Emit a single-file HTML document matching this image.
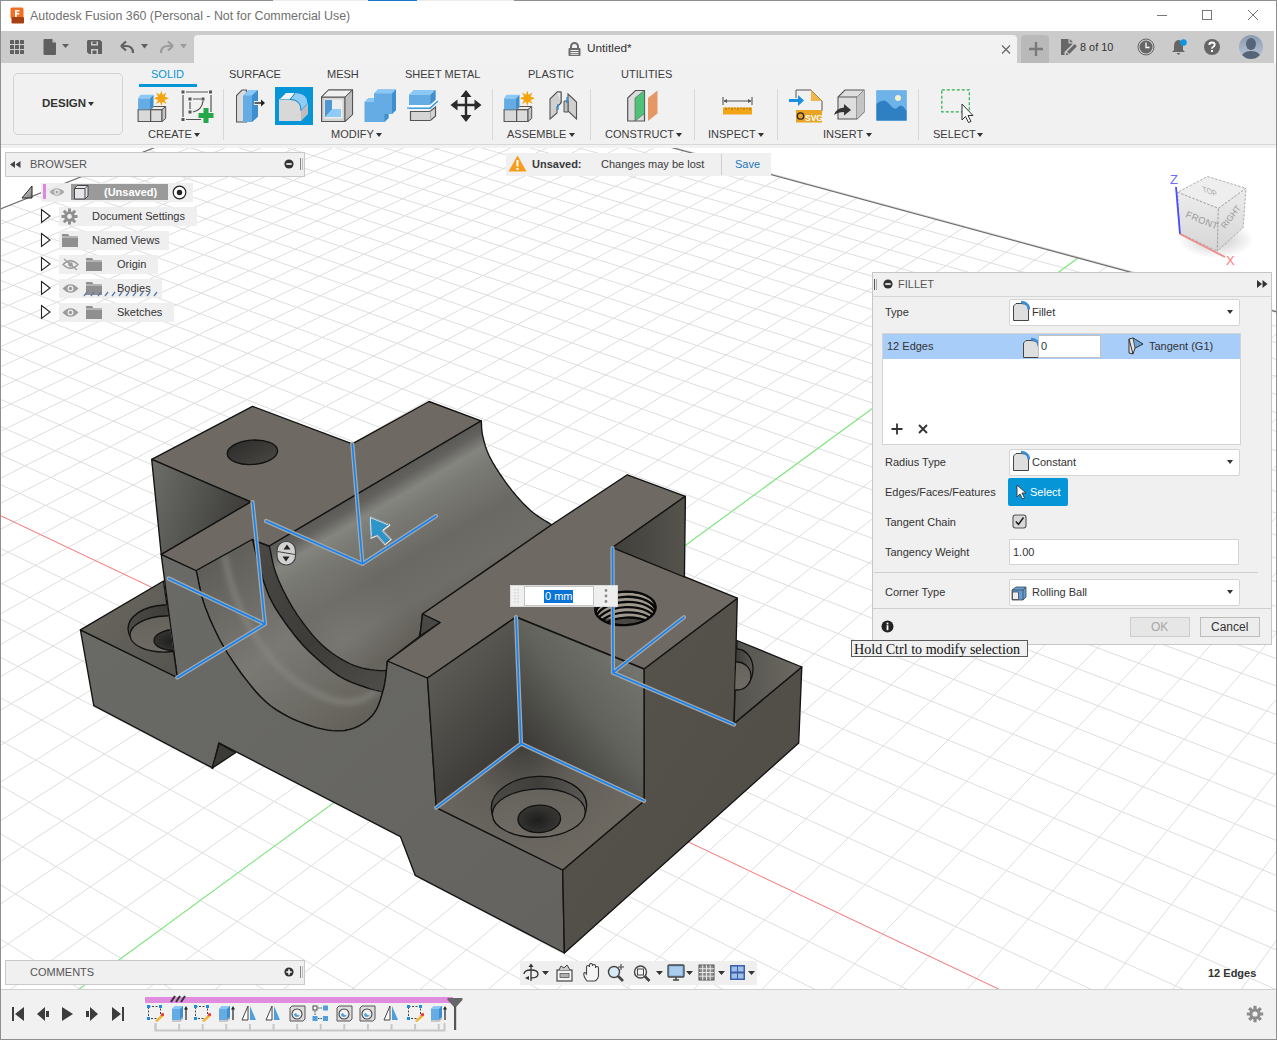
<!DOCTYPE html>
<html><head><meta charset="utf-8">
<style>
*{box-sizing:border-box;margin:0;padding:0}
html,body{width:1277px;height:1040px;overflow:hidden;background:#fff;font-family:"Liberation Sans",sans-serif;color:#333}
.a{position:absolute}
.t{position:absolute;white-space:nowrap;line-height:1}
.rib{font-size:11px;color:#3c3c3c}
.arr{position:absolute;width:0;height:0;border-left:3px solid transparent;border-right:3px solid transparent;border-top:4px solid #333}
.sep{position:absolute;width:1px;background:#d8d8d8}
</style></head><body>
<svg width="1277" height="1040" viewBox="0 0 1277 1040" style="position:absolute;left:0;top:0"><defs>
<linearGradient id="gFront" x1="0" y1="0" x2="1" y2="1"><stop offset="0" stop-color="#6a6a67"/><stop offset="1" stop-color="#64635f"/></linearGradient>
<linearGradient id="gRight" x1="0" y1="0" x2="1" y2="1"><stop offset="0" stop-color="#57544e"/><stop offset="1" stop-color="#4f4c46"/></linearGradient>
<linearGradient id="gGroove" gradientUnits="userSpaceOnUse" x1="269.0" y1="546.0" x2="368.1" y2="714.1"><stop offset="0" stop-color="#5a5955"/><stop offset="0.05" stop-color="#63625e"/><stop offset="0.12" stop-color="#858580"/><stop offset="0.21" stop-color="#7a7a75"/><stop offset="0.42" stop-color="#6b6963"/><stop offset="0.62" stop-color="#6f6d67"/><stop offset="0.8" stop-color="#625f59"/><stop offset="1" stop-color="#6a6862"/></linearGradient><radialGradient id="gGlow" gradientUnits="userSpaceOnUse" cx="345" cy="640" r="70"><stop offset="0" stop-color="#fff" stop-opacity="0.07"/><stop offset="1" stop-color="#fff" stop-opacity="0"/></radialGradient>
<linearGradient id="gDark1" x1="0" y1="0" x2="1" y2="0.3"><stop offset="0" stop-color="#6d6e6a"/><stop offset="1" stop-color="#3e3d39"/></linearGradient>
<linearGradient id="gDark2" gradientUnits="userSpaceOnUse" x1="440" y1="670" x2="521" y2="750"><stop offset="0" stop-color="#5c5a55"/><stop offset="1" stop-color="#3a3935"/></linearGradient>
<linearGradient id="gLight" gradientUnits="userSpaceOnUse" x1="522" y1="750" x2="630" y2="660"><stop offset="0" stop-color="#383733"/><stop offset="0.55" stop-color="#62625d"/><stop offset="1" stop-color="#74746f"/></linearGradient>
<linearGradient id="gDark3" x1="0" y1="0" x2="1" y2="0"><stop offset="0" stop-color="#3f3e3a"/><stop offset="1" stop-color="#57544e"/></linearGradient>
<linearGradient id="gBand" x1="0" y1="0" x2="1" y2="1"><stop offset="0" stop-color="#4a4946"/><stop offset="0.5" stop-color="#3d3c39"/><stop offset="1" stop-color="#55544f"/></linearGradient>
<linearGradient id="gCb" x1="0" y1="0" x2="1" y2="1"><stop offset="0" stop-color="#585752"/><stop offset="0.45" stop-color="#7a7974"/><stop offset="0.7" stop-color="#6b6962"/><stop offset="1" stop-color="#55534d"/></linearGradient>
<linearGradient id="gEar" x1="0" y1="0" x2="1" y2="1"><stop offset="0" stop-color="#6d6a63"/><stop offset="1" stop-color="#55534e"/></linearGradient>
<linearGradient id="gEarR" x1="0" y1="0" x2="1" y2="0"><stop offset="0" stop-color="#55534e"/><stop offset="1" stop-color="#6d6a63"/></linearGradient>
<radialGradient id="gFloor3" gradientUnits="userSpaceOnUse" cx="521" cy="744" r="130"><stop offset="0" stop-color="#403e3a"/><stop offset="0.45" stop-color="#625f59"/><stop offset="1" stop-color="#6e6a62"/></radialGradient>
<linearGradient id="gHole" x1="0" y1="0" x2="1" y2="1"><stop offset="0" stop-color="#2b2a28"/><stop offset="1" stop-color="#4a4946"/></linearGradient>
<radialGradient id="gHole2" cx="0.45" cy="0.55" r="0.6"><stop offset="0" stop-color="#1e1e1d"/><stop offset="1" stop-color="#3a3936"/></radialGradient>
<linearGradient id="gCbw" x1="0" y1="0" x2="1" y2="0"><stop offset="0" stop-color="#4b4a46"/><stop offset="0.5" stop-color="#3f3e3b"/><stop offset="1" stop-color="#5b5a55"/></linearGradient>
<linearGradient id="gFloorH" x1="0" y1="0" x2="0" y2="1"><stop offset="0" stop-color="#66635d"/><stop offset="1" stop-color="#6f6b64"/></linearGradient>
<filter id="blur3" x="-20%" y="-20%" width="140%" height="140%"><feGaussianBlur stdDeviation="2.5"/></filter><clipPath id="cCb"><path d="M196.1 570.5 L197.2 575.1 L198.1 579.7 L199.0 584.2 L200.0 588.7 L201.0 593.3 L202.2 598.0 L203.7 602.9 L205.5 608.0 L207.6 613.3 L209.8 618.9 L212.3 624.5 L215.0 630.3 L217.9 636.2 L221.0 642.2 L224.4 648.1 L228.0 654.0 L232.0 660.1 L236.3 666.4 L240.9 673.0 L245.8 679.4 L250.8 685.7 L255.9 691.7 L261.0 697.2 L266.0 702.0 L271.1 706.2 L276.3 709.9 L281.7 713.2 L287.1 716.2 L292.4 718.8 L297.8 721.1 L303.0 723.1 L308.0 725.0 L312.9 726.7 L317.8 728.1 L322.7 729.2 L327.4 730.1 L332.1 730.7 L336.6 730.9 L340.9 730.9 L345.0 730.5 L349.0 729.7 L352.8 728.6 L356.5 727.1 L360.1 725.3 L363.4 723.2 L366.6 721.0 L369.4 718.5 L372.0 716.0 L374.2 713.2 L376.1 710.2 L377.8 706.8 L379.2 703.3 L380.4 699.7 L381.5 696.1 L382.5 692.5 L383.5 689.0 L384.4 685.5 L385.0 682.1 L385.5 678.6 L386.0 675.1 L386.3 671.5 L386.7 668.0 L387.1 664.5 L387.5 661.0 L440.0 622.5 L440.0 622.5 L438.2 625.9 L436.5 629.1 L434.9 632.4 L433.2 635.6 L431.5 638.9 L429.6 642.4 L427.4 646.1 L425.0 650.0 L422.1 654.5 L418.8 659.6 L415.2 665.0 L411.4 670.5 L407.7 675.8 L404.1 680.7 L400.8 684.8 L398.0 688.0 L395.6 690.2 L393.7 691.6 L392.0 692.3 L390.4 692.6 L389.0 692.5 L387.4 692.3 L385.7 692.0 L383.8 691.8 L381.7 691.6 L379.4 691.3 L377.1 690.9 L374.7 690.3 L372.3 689.6 L369.7 688.8 L367.0 687.9 L364.2 686.9 L361.3 685.9 L358.2 684.8 L355.0 683.6 L351.7 682.4 L348.3 680.9 L344.9 679.3 L341.5 677.5 L338.0 675.4 L334.4 673.0 L330.6 670.2 L326.8 667.1 L322.9 663.9 L319.0 660.6 L315.3 657.3 L311.8 654.1 L308.6 651.0 L305.7 648.1 L302.9 645.2 L300.4 642.3 L298.0 639.5 L295.7 636.7 L293.4 633.8 L291.2 630.9 L289.0 628.0 L286.7 625.0 L284.5 621.9 L282.3 618.7 L280.1 615.5 L278.1 612.4 L276.1 609.3 L274.3 606.3 L272.7 603.5 L271.3 600.8 L270.0 598.3 L269.0 595.9 L268.0 593.6 L267.1 591.3 L266.2 588.9 L265.4 586.5 L264.5 584.0 L263.6 581.4 L262.7 578.7 L261.9 576.0 L261.1 573.2 L260.3 570.4 L259.5 567.6 L258.8 564.8 L258.0 562.0 L257.2 559.2 L256.5 556.3 L255.8 553.4 L255.1 550.6 L254.4 547.7 L253.7 544.8 L253.0 541.9 L252.3 539.0Z"/></clipPath><clipPath id="cGroove"><path d="M196.1 570.5 L197.2 575.1 L198.1 579.7 L199.0 584.2 L200.0 588.7 L201.0 593.3 L202.2 598.0 L203.7 602.9 L205.5 608.0 L207.6 613.3 L209.8 618.9 L212.3 624.5 L215.0 630.3 L217.9 636.2 L221.0 642.2 L224.4 648.1 L228.0 654.0 L232.0 660.1 L236.3 666.4 L240.9 673.0 L245.8 679.4 L250.8 685.7 L255.9 691.7 L261.0 697.2 L266.0 702.0 L271.1 706.2 L276.3 709.9 L281.7 713.2 L287.1 716.2 L292.4 718.8 L297.8 721.1 L303.0 723.1 L308.0 725.0 L312.9 726.7 L317.8 728.1 L322.7 729.2 L327.4 730.1 L332.1 730.7 L336.6 730.9 L340.9 730.9 L345.0 730.5 L349.0 729.7 L352.8 728.6 L356.5 727.1 L360.1 725.3 L363.4 723.2 L366.6 721.0 L369.4 718.5 L372.0 716.0 L374.2 713.2 L376.1 710.2 L377.8 706.8 L379.2 703.3 L380.4 699.7 L381.5 696.1 L382.5 692.5 L383.5 689.0 L384.4 685.5 L385.0 682.1 L385.5 678.6 L386.0 675.1 L386.3 671.5 L386.7 668.0 L387.1 664.5 L387.5 661.0 L420.0 636.0 L440.0 622.5 L422.5 614.0 L551.7 524.8 L549.4 523.3 L547.1 521.9 L544.7 520.5 L542.4 519.1 L540.1 517.7 L537.8 516.1 L535.5 514.5 L533.3 512.8 L531.1 511.0 L529.0 509.1 L526.9 507.1 L524.8 505.0 L522.7 502.9 L520.6 500.6 L518.5 498.3 L516.4 495.9 L514.2 493.3 L512.0 490.6 L509.8 487.7 L507.6 484.8 L505.4 481.8 L503.3 478.9 L501.3 476.0 L499.5 473.3 L497.8 470.7 L496.1 468.1 L494.6 465.6 L493.1 463.2 L491.8 460.8 L490.5 458.4 L489.3 456.0 L488.2 453.6 L487.2 451.2 L486.3 448.8 L485.5 446.5 L484.8 444.1 L484.1 441.8 L483.6 439.6 L483.1 437.4 L482.6 435.3 L482.2 433.3 L482.0 431.4 L481.8 429.5 L481.6 427.7 L481.5 425.9 L481.5 424.1 L481.3 422.3 L481.2 420.5 L269.0 546.0 L252.0 539.5Z"/></clipPath>
<clipPath id="cEar"><path d="M80.4 629.8 L163.5 581.0 L177.3 677.5Z"/></clipPath>
<clipPath id="cEarR"><path d="M734.0 723.5 L801.8 667.0 L737.0 640.5Z"/></clipPath>
<clipPath id="cTh"><ellipse cx="625.4" cy="608.4" rx="30.4" ry="16.8" transform="rotate(-3 625.4 608.4)"/></clipPath>
</defs>
<rect x="1" y="146" width="1275" height="843" fill="#fff"/>
<g><path d="M-45256.8 18233.0L364.1 64.1M-44527.1 18230.3L383.5 69.4M-43797.5 18227.5L403.2 74.7M-43067.9 18224.8L423.1 80.2M-42338.2 18222.1L443.3 85.6M-41608.6 18219.3L463.8 91.2M-40879.0 18216.6L484.5 96.8M-40149.4 18213.9L505.5 102.5M-39419.7 18211.1L526.7 108.3M-38690.1 18208.4L548.3 114.2M-37960.5 18205.7L570.1 120.1M-37230.8 18202.9L592.3 126.1M-36501.2 18200.2L614.7 132.2M-35771.6 18197.4L637.5 138.4M-35042.0 18194.7L660.5 144.6M-34312.3 18192.0L683.9 151.0M-33582.7 18189.2L707.6 157.4M-32853.1 18186.5L731.6 163.9M-32123.4 18183.8L756.0 170.6M-31393.8 18181.0L780.7 177.3M-30664.2 18178.3L805.8 184.1M-29934.6 18175.6L831.3 191.0M-29204.9 18172.8L857.1 198.0M-28475.3 18170.1L883.3 205.1M-27745.7 18167.4L909.9 212.3M-27016.0 18164.6L936.8 219.6M-26286.4 18161.9L964.2 227.1M-25556.8 18159.2L992.0 234.6M-24827.2 18156.4L1020.2 242.3M-24097.5 18153.7L1048.9 250.1M-23367.9 18150.9L1078.0 258.0M-22638.3 18148.2L1107.5 266.0M-21908.6 18145.5L1137.5 274.1M-21179.0 18142.7L1168.0 282.4M-20449.4 18140.0L1199.0 290.8M-19719.8 18137.3L1230.5 299.4M-18990.1 18134.5L1262.4 308.1M-18260.5 18131.8L1294.9 316.9M-17530.9 18129.1L1328.0 325.9M-16801.2 18126.3L1361.6 335.0M-16071.6 18123.6L1395.7 344.3M-15342.0 18120.9L1430.5 353.7M-14612.4 18118.1L1465.8 363.3M-13882.7 18115.4L1501.7 373.0M-13153.1 18112.7L1538.3 383.0M-12423.5 18109.9L1575.5 393.1M-11693.8 18107.2L1613.3 403.3M-10964.2 18104.4L1651.8 413.8M-10234.6 18101.7L1691.1 424.4M-9505.0 18099.0L1731.0 435.3M-8775.3 18096.2L1771.6 446.3M-8045.7 18093.5L1813.1 457.6M-7316.1 18090.8L1855.2 469.0M-6586.4 18088.0L1898.2 480.7M-5856.8 18085.3L1942.0 492.6M-5127.2 18082.6L1986.6 504.7M-4397.6 18079.8L2032.1 517.1M-3667.9 18077.1L2078.5 529.7M-2938.3 18074.4L2125.8 542.5M-2208.7 18071.6L2174.1 555.6M-1479.0 18068.9L2223.3 569.0M-749.4 18066.1L2273.5 582.6M-19.8 18063.4L2324.7 596.5M709.8 18060.7L2377.1 610.7M1439.5 18057.9L2430.5 625.2M2169.1 18055.2L2485.0 640.0M2898.7 18052.5L2540.7 655.2M3628.4 18049.7L2597.7 670.6M4358.0 18047.0L2655.8 686.4M5087.6 18044.3L2715.3 702.6M5817.2 18041.5L2776.1 719.1M6546.9 18038.8L2838.2 735.9M7276.5 18036.1L2901.8 753.2M8006.1 18033.3L2966.9 770.9M8735.8 18030.6L3033.5 789.0M9465.4 18027.9L3101.6 807.5M10195.0 18025.1L3171.5 826.4M10924.6 18022.4L3243.0 845.8M11654.3 18019.6L3316.2 865.7M12383.9 18016.9L3391.3 886.1M13113.5 18014.2L3468.3 907.0M13843.2 18011.4L3547.2 928.5M14572.8 18008.7L3628.2 950.4M15302.4 18006.0L3711.3 973.0M16032.0 18003.2L3796.7 996.2M16761.7 18000.5L3884.3 1020.0M17491.3 17997.8L3974.3 1044.4M18220.9 17995.0L4066.8 1069.5M18950.6 17992.3L4161.9 1095.3M19680.2 17989.6L4259.7 1121.9M20409.8 17986.8L4360.3 1149.2M21139.4 17984.1L4463.9 1177.3M21869.1 17981.4L4570.5 1206.3M22598.7 17978.6L4680.4 1236.1M23328.3 17975.9L4793.6 1266.9M24058.0 17973.1L4910.4 1298.6M24787.6 17970.4L5030.8 1331.3M25517.2 17967.7L5155.1 1365.0M26246.8 17964.9L5283.5 1399.9M26976.5 17962.2L5416.1 1435.9M27706.1 17959.5L5553.2 1473.1M28435.7 17956.7L5695.0 1511.6M29165.4 17954.0L5841.7 1551.5M29895.0 17951.3L5993.7 1592.7M30624.6 17948.5L6151.2 1635.5M31354.2 17945.8L6314.4 1679.8M32083.9 17943.1L6483.8 1725.8M32813.5 17940.3L6659.7 1773.6M33543.1 17937.6L6842.4 1823.2M34272.8 17934.8L7032.4 1874.8M35002.4 17932.1L7230.1 1928.5M35732.0 17929.4L7436.0 1984.4M36461.6 17926.6L7650.6 2042.6M37191.3 17923.9L7874.4 2103.4M37920.9 17921.2L8108.2 2166.9M38650.5 17918.4L8352.5 2233.2M39380.2 17915.7L8608.1 2302.6M40109.8 17913.0L8875.7 2375.3M40839.4 17910.2L9156.4 2451.5M41569.0 17907.5L9450.9 2531.5M42298.7 17904.8L9760.5 2615.5M43028.3 17902.0L10086.2 2704.0M43757.9 17899.3L10429.4 2797.2M44487.6 17896.6L10791.5 2895.5M45217.2 17893.8L11174.2 2999.4M45946.8 17891.1L11579.1 3109.4M46676.4 17888.3L12008.4 3225.9M47406.1 17885.6L12464.3 3349.7M48135.7 17882.9L12949.3 3481.4M48865.3 17880.1L13466.3 3621.8M49595.0 17877.4L14018.6 3771.7M50324.6 17874.7L14609.9 3932.3M51054.2 17871.9L15244.6 4104.6M51783.8 17869.2L15927.6 4290.1M52513.5 17866.5L16664.6 4490.2M53243.1 17863.7L17462.2 4706.8M53972.7 17861.0L18328.3 4942.0M54702.4 17858.3L19272.2 5198.2M55432.0 17855.5L20304.6 5478.6M56161.6 17852.8L21438.9 5786.6M56891.2 17850.1L22690.7 6126.5M57620.9 17847.3L24079.4 6503.5M58350.5 17844.6L25628.7 6924.2M59080.1 17841.8L27368.1 7396.5M59809.8 17839.1L29335.0 7930.6M60539.4 17836.4L31577.2 8539.4M61269.0 17833.6L34156.7 9239.8M61998.6 17830.9L37155.9 10054.2M62728.3 17828.2L40686.2 11012.8M63457.9 17825.4L44902.4 12157.6M64187.5 17822.7L50026.1 13548.9M64917.2 17820.0L56385.3 15275.6M65646.8 17817.2L64488.4 17475.8M-41380.4 16689.2L-44795.4 18231.3M-34981.7 14140.9L-43825.2 18227.6M-30211.3 12241.0L-42854.9 18224.0M-26517.8 10770.1L-41884.7 18220.4M-23573.5 9597.5L-40914.4 18216.7M-21171.5 8640.9L-39944.2 18213.1M-19174.6 7845.6L-38974.0 18209.5M-17488.2 7174.0L-38003.7 18205.8M-16045.2 6599.3L-37033.5 18202.2M-14796.5 6101.9L-36063.2 18198.5M-13705.2 5667.3L-35093.0 18194.9M-12743.3 5284.2L-34122.7 18191.3M-11889.2 4944.1L-33152.5 18187.6M-11125.6 4640.0L-32182.3 18184.0M-10439.0 4366.5L-31212.0 18180.4M-9818.2 4119.3L-30241.8 18176.7M-9254.1 3894.6L-29271.5 18173.1M-8739.5 3689.7L-28301.3 18169.4M-8267.9 3501.9L-27331.0 18165.8M-7834.3 3329.2L-26360.8 18162.2M-7434.3 3169.9L-25390.5 18158.5M-7064.0 3022.4L-24420.3 18154.9M-6720.3 2885.5L-23450.1 18151.3M-6400.4 2758.1L-22479.8 18147.6M-6102.0 2639.3L-21509.6 18144.0M-5822.9 2528.1L-20539.3 18140.3M-5561.3 2424.0L-19569.1 18136.7M-5315.7 2326.1L-18598.8 18133.1M-5084.5 2234.1L-17628.6 18129.4M-4866.6 2147.3L-16658.4 18125.8M-4660.9 2065.3L-15688.1 18122.2M-4466.3 1987.9L-14717.9 18118.5M-4282.0 1914.5L-13747.6 18114.9M-4107.2 1844.8L-12777.4 18111.2M-3941.2 1778.7L-11807.1 18107.6M-3783.3 1715.8L-10836.9 18104.0M-3632.9 1655.9L-9866.7 18100.3M-3489.5 1598.8L-8896.4 18096.7M-3352.7 1544.4L-7926.2 18093.1M-3222.0 1492.3L-6955.9 18089.4M-3097.0 1442.5L-5985.7 18085.8M-2977.3 1394.9L-5015.4 18082.1M-2862.6 1349.2L-4045.2 18078.5M-2752.7 1305.4L-3074.9 18074.9M-2647.1 1263.3L-2104.7 18071.2M-2545.7 1222.9L-1134.5 18067.6M-2448.2 1184.1L-164.2 18064.0M-2354.4 1146.8L806.0 18060.3M-2264.0 1110.8L1776.3 18056.7M-2177.0 1076.1L2746.5 18053.0M-2093.1 1042.7L3716.8 18049.4M-2012.1 1010.4L4687.0 18045.8M-1933.9 979.3L5657.2 18042.1M-1858.4 949.2L6627.5 18038.5M-1785.4 920.2L7597.7 18034.9M-1714.8 892.0L8568.0 18031.2M-1646.5 864.8L9538.2 18027.6M-1580.4 838.5L10508.5 18023.9M-1516.3 813.0L11478.7 18020.3M-1454.2 788.3L12448.9 18016.7M-1394.0 764.3L13419.2 18013.0M-1335.6 741.0L14389.4 18009.4M-1278.9 718.4L15359.7 18005.8M-1223.9 696.5L16329.9 18002.1M-1170.4 675.2L17300.2 17998.5M-1118.4 654.5L18270.4 17994.8M-1067.9 634.4L19240.6 17991.2M-1018.8 614.9L20210.9 17987.6M-971.0 595.8L21181.1 17983.9M-924.5 577.3L22151.4 17980.3M-879.2 559.3L23121.6 17976.7M-835.1 541.7L24091.9 17973.0M-792.1 524.6L25062.1 17969.4M-750.3 507.9L26032.4 17965.7M-709.4 491.6L27002.6 17962.1M-669.6 475.8L27972.8 17958.5M-630.7 460.3L28943.1 17954.8M-592.8 445.2L29913.3 17951.2M-555.8 430.5L30883.6 17947.6M-519.7 416.1L31853.8 17943.9M-484.4 402.0L32824.1 17940.3M-449.9 388.3L33794.3 17936.6M-416.2 374.9L34764.5 17933.0M-383.2 361.7L35734.8 17929.4M-351.0 348.9L36705.0 17925.7M-319.5 336.4L37675.3 17922.1M-288.7 324.1L38645.5 17918.5M-258.6 312.1L39615.8 17914.8M-229.1 300.3L40586.0 17911.2M-200.2 288.8L41556.2 17907.5M-171.9 277.6L42526.5 17903.9M-144.2 266.5L43496.7 17900.3M-117.1 255.7L44467.0 17896.6M-90.5 245.1L45437.2 17893.0M-64.4 234.8L46407.5 17889.4M-38.9 224.6L47377.7 17885.7M-13.9 214.6L48347.9 17882.1M10.7 204.9L49318.2 17878.4M34.8 195.3L50288.4 17874.8M58.4 185.9L51258.7 17871.2M81.5 176.6L52228.9 17867.5M104.3 167.6L53199.2 17863.9M126.6 158.7L54169.4 17860.3M148.5 150.0L55139.7 17856.6M170.0 141.4L56109.9 17853.0M191.1 133.0L57080.1 17849.3M211.9 124.7L58050.4 17845.7M232.2 116.6L59020.6 17842.1M252.2 108.7L59990.9 17838.4M271.9 100.8L60961.1 17834.8M291.2 93.1L61931.4 17831.2M310.2 85.6L62901.6 17827.5M328.9 78.1L63871.8 17823.9M347.3 70.8L64842.1 17820.2M365.3 63.6L65812.3 17816.6" stroke="#dedede" stroke-width="1" fill="none"/>
<path d="M-351.0 348.9L36705.0 17925.7" stroke="#ff7d7d" stroke-width="1" fill="none"/>
<path d="M-23367.9 18150.9L1078.0 258.0" stroke="#7be87b" stroke-width="1.1" fill="none"/>
<path d="M364.1 64.1L65744.4 17816.9M-45256.8 18233.0L364.1 64.1" stroke="#6f6f6f" stroke-width="1.3" fill="none"/></g>
<g><path d="M196.1 570.5 L197.2 575.1 L198.1 579.7 L199.0 584.2 L200.0 588.7 L201.0 593.3 L202.2 598.0 L203.7 602.9 L205.5 608.0 L207.6 613.3 L209.8 618.9 L212.3 624.5 L215.0 630.3 L217.9 636.2 L221.0 642.2 L224.4 648.1 L228.0 654.0 L232.0 660.1 L236.3 666.4 L240.9 673.0 L245.8 679.4 L250.8 685.7 L255.9 691.7 L261.0 697.2 L266.0 702.0 L271.1 706.2 L276.3 709.9 L281.7 713.2 L287.1 716.2 L292.4 718.8 L297.8 721.1 L303.0 723.1 L308.0 725.0 L312.9 726.7 L317.8 728.1 L322.7 729.2 L327.4 730.1 L332.1 730.7 L336.6 730.9 L340.9 730.9 L345.0 730.5 L349.0 729.7 L352.8 728.6 L356.5 727.1 L360.1 725.3 L363.4 723.2 L366.6 721.0 L369.4 718.5 L372.0 716.0 L374.2 713.2 L376.1 710.2 L377.8 706.8 L379.2 703.3 L380.4 699.7 L381.5 696.1 L382.5 692.5 L383.5 689.0 L384.4 685.5 L385.0 682.1 L385.5 678.6 L386.0 675.1 L386.3 671.5 L386.7 668.0 L387.1 664.5 L387.5 661.0 L420.0 636.0 L440.0 622.5 L422.5 614.0 L551.7 524.8 L549.4 523.3 L547.1 521.9 L544.7 520.5 L542.4 519.1 L540.1 517.7 L537.8 516.1 L535.5 514.5 L533.3 512.8 L531.1 511.0 L529.0 509.1 L526.9 507.1 L524.8 505.0 L522.7 502.9 L520.6 500.6 L518.5 498.3 L516.4 495.9 L514.2 493.3 L512.0 490.6 L509.8 487.7 L507.6 484.8 L505.4 481.8 L503.3 478.9 L501.3 476.0 L499.5 473.3 L497.8 470.7 L496.1 468.1 L494.6 465.6 L493.1 463.2 L491.8 460.8 L490.5 458.4 L489.3 456.0 L488.2 453.6 L487.2 451.2 L486.3 448.8 L485.5 446.5 L484.8 444.1 L484.1 441.8 L483.6 439.6 L483.1 437.4 L482.6 435.3 L482.2 433.3 L482.0 431.4 L481.8 429.5 L481.6 427.7 L481.5 425.9 L481.5 424.1 L481.3 422.3 L481.2 420.5 L269.0 546.0 L252.0 539.5Z" fill="url(#gGroove)" stroke="#131313" stroke-width="1.35" stroke-linejoin="round" /><path d="M196.1 570.5 L197.2 575.1 L198.1 579.7 L199.0 584.2 L200.0 588.7 L201.0 593.3 L202.2 598.0 L203.7 602.9 L205.5 608.0 L207.6 613.3 L209.8 618.9 L212.3 624.5 L215.0 630.3 L217.9 636.2 L221.0 642.2 L224.4 648.1 L228.0 654.0 L232.0 660.1 L236.3 666.4 L240.9 673.0 L245.8 679.4 L250.8 685.7 L255.9 691.7 L261.0 697.2 L266.0 702.0 L271.1 706.2 L276.3 709.9 L281.7 713.2 L287.1 716.2 L292.4 718.8 L297.8 721.1 L303.0 723.1 L308.0 725.0 L312.9 726.7 L317.8 728.1 L322.7 729.2 L327.4 730.1 L332.1 730.7 L336.6 730.9 L340.9 730.9 L345.0 730.5 L349.0 729.7 L352.8 728.6 L356.5 727.1 L360.1 725.3 L363.4 723.2 L366.6 721.0 L369.4 718.5 L372.0 716.0 L374.2 713.2 L376.1 710.2 L377.8 706.8 L379.2 703.3 L380.4 699.7 L381.5 696.1 L382.5 692.5 L383.5 689.0 L384.4 685.5 L385.0 682.1 L385.5 678.6 L386.0 675.1 L386.3 671.5 L386.7 668.0 L387.1 664.5 L387.5 661.0 L420.0 636.0 L440.0 622.5 L422.5 614.0 L551.7 524.8 L549.4 523.3 L547.1 521.9 L544.7 520.5 L542.4 519.1 L540.1 517.7 L537.8 516.1 L535.5 514.5 L533.3 512.8 L531.1 511.0 L529.0 509.1 L526.9 507.1 L524.8 505.0 L522.7 502.9 L520.6 500.6 L518.5 498.3 L516.4 495.9 L514.2 493.3 L512.0 490.6 L509.8 487.7 L507.6 484.8 L505.4 481.8 L503.3 478.9 L501.3 476.0 L499.5 473.3 L497.8 470.7 L496.1 468.1 L494.6 465.6 L493.1 463.2 L491.8 460.8 L490.5 458.4 L489.3 456.0 L488.2 453.6 L487.2 451.2 L486.3 448.8 L485.5 446.5 L484.8 444.1 L484.1 441.8 L483.6 439.6 L483.1 437.4 L482.6 435.3 L482.2 433.3 L482.0 431.4 L481.8 429.5 L481.6 427.7 L481.5 425.9 L481.5 424.1 L481.3 422.3 L481.2 420.5 L269.0 546.0 L252.0 539.5Z" fill="url(#gGlow)" /><path d="M252.0 539.5 L253.0 541.9 L253.7 544.8 L254.4 547.7 L255.1 550.6 L255.8 553.4 L256.5 556.3 L257.2 559.2 L258.0 562.0 L258.8 564.8 L259.5 567.6 L260.3 570.4 L261.1 573.2 L261.9 576.0 L262.7 578.7 L263.6 581.4 L264.5 584.0 L265.4 586.5 L266.2 588.9 L267.1 591.3 L268.0 593.6 L269.0 595.9 L270.0 598.3 L271.3 600.8 L272.7 603.5 L274.3 606.3 L276.1 609.3 L278.1 612.4 L280.1 615.5 L282.3 618.7 L284.5 621.9 L286.7 625.0 L289.0 628.0 L291.2 630.9 L293.4 633.8 L295.7 636.7 L298.0 639.5 L300.4 642.3 L302.9 645.2 L305.7 648.1 L308.6 651.0 L311.8 654.1 L315.3 657.3 L319.0 660.6 L322.9 663.9 L326.8 667.1 L330.6 670.2 L334.4 673.0 L338.0 675.4 L341.5 677.5 L344.9 679.3 L348.3 680.9 L351.7 682.4 L355.0 683.6 L358.2 684.8 L361.3 685.9 L364.2 686.9 L367.0 687.9 L369.7 688.8 L372.3 689.6 L374.7 690.3 L377.1 690.9 L379.4 691.3 L381.7 691.6 L383.8 691.8 L385.7 692.0 L387.4 692.3 L389.0 692.5 L390.4 692.6 L392.0 692.3 L393.7 691.6 L395.6 690.2 L398.0 688.0 L400.8 684.8 L404.1 680.7 L407.7 675.8 L411.4 670.5 L415.2 665.0 L418.8 659.6 L422.1 654.5 L425.0 650.0 L427.4 646.1 L429.6 642.4 L431.5 638.9 L433.2 635.6 L434.9 632.4 L436.5 629.1 L438.2 625.9 L440.0 622.5 L422.5 614.0 L422.0 617.3 L421.6 620.6 L421.3 623.9 L421.0 627.2 L420.5 630.5 L419.9 633.8 L419.1 636.9 L418.0 640.0 L416.6 643.0 L414.8 646.1 L412.9 649.1 L410.8 652.1 L408.5 654.9 L406.3 657.5 L404.1 659.9 L402.0 662.0 L400.1 663.8 L398.2 665.4 L396.5 666.8 L394.6 667.9 L392.7 668.9 L390.6 669.6 L388.2 670.2 L385.4 670.5 L382.2 670.6 L378.6 670.5 L374.8 670.2 L370.7 669.7 L366.5 669.0 L362.4 668.1 L358.3 666.9 L354.4 665.6 L350.6 664.0 L346.8 662.2 L343.0 660.2 L339.2 657.9 L335.5 655.5 L331.9 653.0 L328.4 650.3 L325.0 647.6 L321.8 644.7 L318.6 641.6 L315.6 638.4 L312.7 635.1 L309.8 631.6 L307.1 628.2 L304.5 624.8 L302.0 621.5 L299.6 618.2 L297.3 614.9 L295.2 611.6 L293.1 608.4 L291.2 605.1 L289.3 601.8 L287.5 598.6 L285.8 595.4 L284.2 592.3 L282.6 589.1 L281.2 586.1 L279.8 583.0 L278.5 580.0 L277.3 576.9 L276.2 573.9 L275.1 570.8 L274.1 567.7 L273.3 564.7 L272.6 561.6 L271.9 558.5 L271.3 555.5 L270.7 552.4 L270.1 549.4 L269.4 546.3Z" fill="url(#gBand)" stroke="#131313" stroke-width="1.35" stroke-linejoin="round" clip-path="url(#cGroove)"/><path d="M196.1 570.5 L197.2 575.1 L198.1 579.7 L199.0 584.2 L200.0 588.7 L201.0 593.3 L202.2 598.0 L203.7 602.9 L205.5 608.0 L207.6 613.3 L209.8 618.9 L212.3 624.5 L215.0 630.3 L217.9 636.2 L221.0 642.2 L224.4 648.1 L228.0 654.0 L232.0 660.1 L236.3 666.4 L240.9 673.0 L245.8 679.4 L250.8 685.7 L255.9 691.7 L261.0 697.2 L266.0 702.0 L271.1 706.2 L276.3 709.9 L281.7 713.2 L287.1 716.2 L292.4 718.8 L297.8 721.1 L303.0 723.1 L308.0 725.0 L312.9 726.7 L317.8 728.1 L322.7 729.2 L327.4 730.1 L332.1 730.7 L336.6 730.9 L340.9 730.9 L345.0 730.5 L349.0 729.7 L352.8 728.6 L356.5 727.1 L360.1 725.3 L363.4 723.2 L366.6 721.0 L369.4 718.5 L372.0 716.0 L374.2 713.2 L376.1 710.2 L377.8 706.8 L379.2 703.3 L380.4 699.7 L381.5 696.1 L382.5 692.5 L383.5 689.0 L384.4 685.5 L385.0 682.1 L385.5 678.6 L386.0 675.1 L386.3 671.5 L386.7 668.0 L387.1 664.5 L387.5 661.0 L440.0 622.5 L440.0 622.5 L438.2 625.9 L436.5 629.1 L434.9 632.4 L433.2 635.6 L431.5 638.9 L429.6 642.4 L427.4 646.1 L425.0 650.0 L422.1 654.5 L418.8 659.6 L415.2 665.0 L411.4 670.5 L407.7 675.8 L404.1 680.7 L400.8 684.8 L398.0 688.0 L395.6 690.2 L393.7 691.6 L392.0 692.3 L390.4 692.6 L389.0 692.5 L387.4 692.3 L385.7 692.0 L383.8 691.8 L381.7 691.6 L379.4 691.3 L377.1 690.9 L374.7 690.3 L372.3 689.6 L369.7 688.8 L367.0 687.9 L364.2 686.9 L361.3 685.9 L358.2 684.8 L355.0 683.6 L351.7 682.4 L348.3 680.9 L344.9 679.3 L341.5 677.5 L338.0 675.4 L334.4 673.0 L330.6 670.2 L326.8 667.1 L322.9 663.9 L319.0 660.6 L315.3 657.3 L311.8 654.1 L308.6 651.0 L305.7 648.1 L302.9 645.2 L300.4 642.3 L298.0 639.5 L295.7 636.7 L293.4 633.8 L291.2 630.9 L289.0 628.0 L286.7 625.0 L284.5 621.9 L282.3 618.7 L280.1 615.5 L278.1 612.4 L276.1 609.3 L274.3 606.3 L272.7 603.5 L271.3 600.8 L270.0 598.3 L269.0 595.9 L268.0 593.6 L267.1 591.3 L266.2 588.9 L265.4 586.5 L264.5 584.0 L263.6 581.4 L262.7 578.7 L261.9 576.0 L261.1 573.2 L260.3 570.4 L259.5 567.6 L258.8 564.8 L258.0 562.0 L257.2 559.2 L256.5 556.3 L255.8 553.4 L255.1 550.6 L254.4 547.7 L253.7 544.8 L253.0 541.9 L252.3 539.0Z" fill="url(#gCb)" stroke="#131313" stroke-width="1.35" stroke-linejoin="round" clip-path="url(#cGroove)"/><path d="M224.2 554.8 L225.3 559.3 L226.3 563.8 L227.3 568.3 L228.3 572.9 L229.4 577.4 L230.7 581.8 L232.1 586.3 L233.6 590.6 L235.1 595.0 L236.8 599.4 L238.4 603.7 L240.2 608.0 L242.1 612.2 L244.0 616.4 L246.1 620.6 L248.2 624.6 L250.5 628.7 L252.9 632.6 L255.4 636.5 L258.0 640.4 L260.6 644.2 L263.3 648.0 L266.1 651.7 L269.0 655.4 L271.9 659.0 L274.9 662.5 L278.0 665.9 L281.2 669.2 L284.6 672.4 L288.1 675.4 L291.7 678.3 L295.3 681.0 L299.1 683.5 L303.0 686.0 L306.9 688.3 L310.9 690.5 L314.9 692.7 L319.0 694.7 L323.1 696.5 L327.3 698.2 L331.5 699.6 L335.7 700.8 L340.0 701.7 L344.2 702.1 L348.4 702.1 L352.5 701.7 L356.5 701.0 L360.3 700.0 L363.9 698.7 L367.2 697.0 L370.1 695.1 L372.7 693.1 L375.3 691.0 L377.8 688.9 L380.2 686.7 L382.5 684.4 L384.6 681.9 L386.8 679.3 L389.0 676.8" fill="none" stroke="#8a8983" stroke-width="7" stroke-opacity="0.55" filter="url(#blur3)" clip-path="url(#cCb)"/><path d="M80.4 629.8 L177.3 677.5 L161.2 554.3 L196.1 570.5 L197.2 575.1 L198.1 579.7 L199.0 584.2 L200.0 588.7 L201.0 593.3 L202.2 598.0 L203.7 602.9 L205.5 608.0 L207.6 613.3 L209.8 618.9 L212.3 624.5 L215.0 630.3 L217.9 636.2 L221.0 642.2 L224.4 648.1 L228.0 654.0 L232.0 660.1 L236.3 666.4 L240.9 673.0 L245.8 679.4 L250.8 685.7 L255.9 691.7 L261.0 697.2 L266.0 702.0 L271.1 706.2 L276.3 709.9 L281.7 713.2 L287.1 716.2 L292.4 718.8 L297.8 721.1 L303.0 723.1 L308.0 725.0 L312.9 726.7 L317.8 728.1 L322.7 729.2 L327.4 730.1 L332.1 730.7 L336.6 730.9 L340.9 730.9 L345.0 730.5 L349.0 729.7 L352.8 728.6 L356.5 727.1 L360.1 725.3 L363.4 723.2 L366.6 721.0 L369.4 718.5 L372.0 716.0 L374.2 713.2 L376.1 710.2 L377.8 706.8 L379.2 703.3 L380.4 699.7 L381.5 696.1 L382.5 692.5 L383.5 689.0 L384.4 685.5 L385.0 682.1 L385.5 678.6 L386.0 675.1 L386.3 671.5 L386.7 668.0 L387.1 664.5 L387.5 661.0 L427.5 678.0 L436.3 807.7 L562.7 870.0 L564.4 953.0 L415.2 875.3 L400.4 836.6 L218.8 742.9 L212.9 768.2 L93.8 705.6Z" fill="url(#gFront)" stroke="#131313" stroke-width="1.35" stroke-linejoin="round" /><path d="M219.2 743.5 L235.4 752.7 L212.0 768.3Z" fill="#3d3b37" stroke="#131313" stroke-width="1.35" stroke-linejoin="round" /><path d="M80.4 629.8 L163.5 581.0 L177.3 677.5Z" fill="url(#gEar)" stroke="#131313" stroke-width="1.35" stroke-linejoin="round" /><path d="M562.7 870.0 L644.0 801.0 L644.0 669.0 L737.3 598.2 L734.0 723.5 L801.8 667.0 L798.7 743.0 L564.4 953.0Z" fill="url(#gRight)" stroke="#131313" stroke-width="1.35" stroke-linejoin="round" /><path d="M734.0 723.5 L801.8 667.0 L737.0 640.5Z" fill="url(#gEarR)" stroke="#131313" stroke-width="1.35" stroke-linejoin="round" /><path d="M151.7 459.4 L252.5 406.3 L352.3 443.8 L429.0 401.5 L481.0 420.8 L269.0 546.0 L252.0 539.5 L196.1 570.5 L161.2 554.3 L250.7 501.8Z" fill="#6e6a63" stroke="#131313" stroke-width="1.35" stroke-linejoin="round" /><path d="M151.7 459.4 L250.7 501.8 L161.2 554.3Z" fill="url(#gDark1)" stroke="#131313" stroke-width="1.35" stroke-linejoin="round" /><path d="M387.5 661.0 L427.5 678.0 L516.0 617.0 L644.0 669.0 L737.3 598.2 L612.5 547.5 L685.4 496.3 L627.3 474.8 L551.7 524.8 L422.5 614.0 L440.0 622.5 L387.5 661.0Z" fill="#6e6a63" stroke="#131313" stroke-width="1.35" stroke-linejoin="round" /><path d="M422.5 614.0 L440.0 622.5 L420.0 636.0Z" fill="#494844" stroke="#131313" stroke-width="1.35" stroke-linejoin="round" /><path d="M427.5 678.0 L516.0 617.0 L521.0 743.6 L436.3 807.7Z" fill="url(#gDark2)" stroke="#131313" stroke-width="1.35" stroke-linejoin="round" /><path d="M516.0 617.0 L644.0 669.0 L644.0 801.0 L521.0 743.6Z" fill="url(#gLight)" stroke="#131313" stroke-width="1.35" stroke-linejoin="round" /><path d="M436.3 807.7 L521.0 743.6 L644.0 801.0 L562.7 870.0Z" fill="url(#gFloor3)" stroke="#131313" stroke-width="1.35" stroke-linejoin="round" /><path d="M612.5 547.5 L685.4 496.3 L684.4 577.0Z" fill="url(#gDark3)" stroke="#131313" stroke-width="1.35" stroke-linejoin="round" /><ellipse cx="252.4" cy="452.3" rx="25.2" ry="12.2" transform="rotate(-4 252.4 452.3)" fill="url(#gHole)" stroke="#111" stroke-width="1.3" /><ellipse cx="539" cy="806.8" rx="47.7" ry="30.4" transform="rotate(-2 539 806.8)" fill="url(#gCbw)" stroke="#111" stroke-width="1.3" /><ellipse cx="538.8" cy="813" rx="46.5" ry="24.2" transform="rotate(-2 538.8 813)" fill="url(#gFloorH)" stroke="#111" stroke-width="1.3" /><ellipse cx="539.3" cy="818.9" rx="21.3" ry="13.7" transform="rotate(-2 539.3 818.9)" fill="url(#gHole2)" stroke="#111" stroke-width="1.3" /><g clip-path="url(#cEar)"><ellipse cx="165" cy="628" rx="37" ry="23" transform="rotate(-2 165 628)" fill="url(#gCbw)" stroke="#111" stroke-width="1.3" /><ellipse cx="166" cy="634" rx="36" ry="18" transform="rotate(-2 166 634)" fill="url(#gFloorH)" stroke="#111" stroke-width="1.3" /><ellipse cx="175" cy="640" rx="21" ry="10.5" transform="rotate(-2 175 640)" fill="url(#gHole2)" stroke="#111" stroke-width="1.3" /></g><g clip-path="url(#cEarR)"><ellipse cx="737" cy="669" rx="16" ry="20" transform="rotate(0 737 669)" fill="url(#gCbw)" stroke="#111" stroke-width="1.3" /><ellipse cx="737" cy="676" rx="14" ry="14" transform="rotate(0 737 676)" fill="url(#gFloorH)" stroke="#111" stroke-width="1.3" /></g><g clip-path="url(#cTh)"><rect x="590" y="585" width="70" height="45" fill="#9e988d"/><ellipse cx="622" cy="623" rx="24" ry="5.5" fill="#4a4843"/><ellipse cx="625.4" cy="608.4" rx="30.4" ry="16.8" transform="rotate(-3 625.4 608.4)" fill="none" stroke="#080808" stroke-width="2.3"/><ellipse cx="625.4" cy="613.6" rx="30.4" ry="16.8" transform="rotate(-3 625.4 608.4)" fill="none" stroke="#080808" stroke-width="2.3"/><ellipse cx="625.4" cy="618.8" rx="30.4" ry="16.8" transform="rotate(-3 625.4 608.4)" fill="none" stroke="#080808" stroke-width="2.3"/><ellipse cx="625.4" cy="624.0" rx="30.4" ry="16.8" transform="rotate(-3 625.4 608.4)" fill="none" stroke="#080808" stroke-width="2.3"/><ellipse cx="625.4" cy="629.2" rx="30.4" ry="16.8" transform="rotate(-3 625.4 608.4)" fill="none" stroke="#080808" stroke-width="2.3"/><ellipse cx="625.4" cy="634.4" rx="30.4" ry="16.8" transform="rotate(-3 625.4 608.4)" fill="none" stroke="#080808" stroke-width="2.3"/></g><ellipse cx="625.4" cy="608.4" rx="30.4" ry="16.8" transform="rotate(-3 625.4 608.4)" fill="none" stroke="#080808" stroke-width="2.2"/></g>
<path d="M252.5 502.0L265.0 624.0M265.0 624.0L177.3 677.5M265.0 624.0L168.7 578.5M352.3 444.0L362.5 563.8M362.5 563.8L266.0 521.0M362.5 563.8L436.0 516.0M516.0 617.0L521.0 743.6M521.0 743.6L436.3 807.7M521.0 743.6L644.0 800.8M612.5 548.0L613.0 672.7M613.0 672.7L683.8 617.3M613.0 672.7L734.0 724.6" stroke="#a8a6a2" stroke-width="4.2" stroke-linecap="round" fill="none"/><path d="M252.5 502.0L265.0 624.0M265.0 624.0L177.3 677.5M265.0 624.0L168.7 578.5M352.3 444.0L362.5 563.8M362.5 563.8L266.0 521.0M362.5 563.8L436.0 516.0M516.0 617.0L521.0 743.6M521.0 743.6L436.3 807.7M521.0 743.6L644.0 800.8M612.5 548.0L613.0 672.7M613.0 672.7L683.8 617.3M613.0 672.7L734.0 724.6" stroke="#0a84ff" stroke-width="1.6" stroke-linecap="round" fill="none"/>
<path d="M370 517L389.5 525L382.5 530.5L391 539.5L385 544.5L377 535.5L371 538z" fill="#2e95c9" stroke="#e8e8e8" stroke-width="1.6" stroke-linejoin="round"/><path d="M370 517L389.5 525L382.5 530.5L391 539.5L385 544.5L377 535.5L371 538z" fill="none" stroke="#2a4a66" stroke-width="0.5" transform="translate(-0.6 -0.6) scale(1.0)"/>
<rect x="277" y="541.5" width="18.5" height="23.5" rx="9" fill="#d2d2d2" stroke="#444" stroke-width="1.2"/><path d="M277.5 551.5L295 554.5" stroke="#444" stroke-width="1"/><path d="M287 544.5L290.5 549.5H283.5z M286 561.5L289.5 556.5H282.5z" fill="#222"/>
</svg>
<!-- window border -->
<div class="a" style="left:0;top:0;width:1277px;height:1040px;border:1px solid #8f8f8f;border-right-color:#8f8f8f;pointer-events:none;z-index:50"></div>
<!-- title bar -->
<div class="a" style="left:273px;top:0;width:241px;height:1px;background:#ececec;z-index:51"></div><div class="a" style="left:368px;top:0;width:49px;height:1px;background:#1a78c8;z-index:51"></div>
<div class="a" style="left:1px;top:1px;width:1275px;height:30px;background:#fff"></div>
<svg class="a" style="left:10px;top:7px" width="15" height="17" viewBox="0 0 15 17"><rect x="0.5" y="0.5" width="13" height="11" rx="1.5" fill="#f26f21"/><rect x="1.5" y="10" width="12.5" height="6.5" rx="1" fill="#a64012"/><path d="M5 3h4.5v1.6H6.8v1.5h2.4v1.5H6.8V10H5z" fill="#fff"/></svg>
<div class="t" style="left:30px;top:10px;font-size:12.4px;color:#707070">Autodesk Fusion 360 (Personal - Not for Commercial Use)</div>
<div class="a" style="left:1157px;top:15px;width:10px;height:1px;background:#777"></div>
<div class="a" style="left:1202px;top:10px;width:10px;height:10px;border:1px solid #777"></div>
<svg class="a" style="left:1247px;top:9px" width="12" height="12"><path d="M1 1L11 11M11 1L1 11" stroke="#777" stroke-width="1"/></svg>
<!-- tab bar -->
<div class="a" style="left:1px;top:31px;width:1273px;height:32px;background:#cbcbcb"></div>
<svg class="a" style="left:10px;top:40px" width="15" height="15"><g fill="#606060"><rect x="0" y="0" width="4" height="4" rx=".6"/><rect x="5" y="0" width="4" height="4" rx=".6"/><rect x="10" y="0" width="4" height="4" rx=".6"/><rect x="0" y="5" width="4" height="4" rx=".6"/><rect x="5" y="5" width="4" height="4" rx=".6"/><rect x="10" y="5" width="4" height="4" rx=".6"/><rect x="0" y="10" width="4" height="4" rx=".6"/><rect x="5" y="10" width="4" height="4" rx=".6"/><rect x="10" y="10" width="4" height="4" rx=".6"/></g></svg>
<svg class="a" style="left:43px;top:39px" width="28" height="17"><path d="M0.5 1Q0.5 0 1.5 0H9L13 4V15Q13 16 12 16H1.5Q0.5 16 0.5 15z" fill="#606060"/><path d="M9.5 0.5V3.5H12.5" fill="#cbcbcb"/><path d="M19 5h7l-3.5 4z" fill="#606060"/></svg>
<svg class="a" style="left:87px;top:40px" width="16" height="15"><path d="M1 0H13L15 2V14H2L0 12V1z" fill="#606060"/><rect x="4" y="1.5" width="7" height="4" fill="#cbcbcb"/><rect x="5.5" y="1.5" width="4" height="2.5" fill="#606060"/><rect x="4" y="9" width="7" height="5" fill="#cbcbcb"/><rect x="5.5" y="10.5" width="4" height="3.5" fill="#606060"/></svg>
<svg class="a" style="left:120px;top:40px" width="30" height="15"><path d="M13 13Q13 6 6 6H3" stroke="#606060" stroke-width="2.2" fill="none"/><path d="M1 6L6 1.5M1 6L6 10.5" stroke="#606060" stroke-width="2.2" fill="none"/><path d="M21 4h7l-3.5 4.5z" fill="#606060"/></svg>
<svg class="a" style="left:159px;top:40px" width="30" height="15"><path d="M2 13Q2 6 9 6H12" stroke="#9c9c9c" stroke-width="2.2" fill="none"/><path d="M14 6L9 1.5M14 6L9 10.5" stroke="#9c9c9c" stroke-width="2.2" fill="none"/><path d="M21 4h7l-3.5 4.5z" fill="#9c9c9c"/></svg>
<div class="a" style="left:194px;top:35px;width:823px;height:28px;background:#f2f2f2;border-radius:4px 4px 0 0"></div>
<svg class="a" style="left:568px;top:42px" width="13" height="14"><path d="M3 6V4.5a3.5 3.5 0 0 1 7 0V6" stroke="#6a6a6a" stroke-width="2" fill="none"/><rect x="0.5" y="6" width="12" height="8" rx="1" fill="#6a6a6a"/><path d="M2.5 8.5h8M2.5 10.5h8M2.5 12.3h8" stroke="#f2f2f2" stroke-width="1"/></svg>
<div class="t" style="left:587px;top:43px;font-size:11.8px;color:#333">Untitled*</div>
<svg class="a" style="left:1001px;top:45px" width="10" height="9"><path d="M1 0.5L9 8.5M9 0.5L1 8.5" stroke="#666" stroke-width="1.2"/></svg>
<div class="a" style="left:1021px;top:35px;width:28px;height:28px;background:#b9b9b9;border-radius:4px 4px 0 0"></div>
<svg class="a" style="left:1029px;top:42px" width="14" height="14"><path d="M7 0V14M0 7H14" stroke="#7a7a7a" stroke-width="2.4"/></svg>
<svg class="a" style="left:1060px;top:38px" width="18" height="18"><path d="M1 1H8.5V5.5H12.5V6L4.5 14V17H1z" fill="#676767"/><path d="M9.8 1L13 4.2H9.8z" fill="#676767"/><path d="M8.2 14.8L15.8 7.2" stroke="#676767" stroke-width="3.2"/><path d="M5.8 17.3L6.5 14.5L8.6 16.6z" fill="#676767"/></svg>
<div class="t" style="left:1080px;top:42px;font-size:10.9px;color:#333">8 of 10</div>
<svg class="a" style="left:1137px;top:38px" width="18" height="18"><circle cx="9" cy="9" r="8" stroke="#666" stroke-width="1" fill="none"/><circle cx="9" cy="9" r="6.5" fill="#666"/><path d="M9 4.5V9.5H12.5" stroke="#fff" stroke-width="1.3" fill="none"/></svg>
<svg class="a" style="left:1171px;top:38px" width="18" height="18"><path d="M7 2Q3 3 3 8V12L1 14H14L12 12V8Q12 3 8 2z" fill="#666"/><path d="M5.5 15H9.5L7.5 17z" fill="#666"/><circle cx="12.5" cy="4.5" r="3.2" fill="#0b96e5"/></svg>
<svg class="a" style="left:1203px;top:38px" width="18" height="18"><circle cx="9" cy="9" r="8" fill="#666"/><path d="M6.3 7Q6.3 4.5 9 4.5Q11.7 4.5 11.7 6.8Q11.7 8.2 10 9Q9 9.5 9 10.8" stroke="#fff" stroke-width="1.8" fill="none"/><rect x="8" y="12" width="2" height="2" fill="#fff"/></svg>
<svg class="a" style="left:1238px;top:34px" width="26" height="26"><defs><linearGradient id="av" x1="0" y1="0" x2="0" y2="1"><stop offset="0" stop-color="#8a9bb0"/><stop offset="1" stop-color="#b9c6d6"/></linearGradient><clipPath id="avc"><circle cx="13" cy="13" r="12"/></clipPath></defs><circle cx="13" cy="13" r="12" fill="url(#av)"/><g clip-path="url(#avc)" fill="#566478"><ellipse cx="13" cy="10" rx="5" ry="6"/><path d="M3 26Q3 17 13 17Q23 17 23 26z"/></g></svg>
<!-- ribbon -->
<div class="a" style="left:1px;top:63px;width:1275px;height:82px;background:#f1f1f1;border-bottom:1px solid #d8d8d8"></div><div class="a" style="left:1px;top:145px;width:1275px;height:3px;background:#f2f2f2"></div>
<div class="a" style="left:13px;top:73px;width:110px;height:62px;border:1px solid #d3d3d3;border-radius:5px"></div>
<div class="t" style="left:42px;top:98px;font-size:11.5px;font-weight:bold;color:#333">DESIGN</div>
<div class="arr" style="left:88px;top:102px"></div>
<div class="t rib" style="left:151px;top:69px;color:#0696d7;font-size:11px">SOLID</div>
<div class="a" style="left:139px;top:84px;width:58px;height:3px;background:#0696d7"></div>
<div class="t rib" style="left:229px;top:69px">SURFACE</div>
<div class="t rib" style="left:327px;top:69px">MESH</div>
<div class="t rib" style="left:405px;top:69px">SHEET METAL</div>
<div class="t rib" style="left:528px;top:69px">PLASTIC</div>
<div class="t rib" style="left:621px;top:69px">UTILITIES</div>
<div class="t rib" style="left:148px;top:129px">CREATE</div><div class="arr" style="left:194px;top:133px"></div>
<div class="t rib" style="left:331px;top:129px">MODIFY</div><div class="arr" style="left:376px;top:133px"></div>
<div class="t rib" style="left:507px;top:129px">ASSEMBLE</div><div class="arr" style="left:569px;top:133px"></div>
<div class="t rib" style="left:605px;top:129px">CONSTRUCT</div><div class="arr" style="left:676px;top:133px"></div>
<div class="t rib" style="left:708px;top:129px">INSPECT</div><div class="arr" style="left:758px;top:133px"></div>
<div class="t rib" style="left:823px;top:129px">INSERT</div><div class="arr" style="left:866px;top:133px"></div>
<div class="t rib" style="left:933px;top:129px">SELECT</div><div class="arr" style="left:977px;top:133px"></div>
<div class="sep" style="left:223px;top:89px;height:51px"></div>
<div class="sep" style="left:492px;top:89px;height:51px"></div>
<div class="sep" style="left:590px;top:89px;height:51px"></div>
<div class="sep" style="left:694px;top:89px;height:51px"></div>
<div class="sep" style="left:777px;top:89px;height:51px"></div>
<div class="sep" style="left:918px;top:89px;height:51px"></div>
<!-- CREATE: new component -->
<svg class="a" style="left:137px;top:89px" width="34" height="34" viewBox="0 0 34 34">
<path d="M1.1 20.6H13.7V32.5H1.1z" fill="#d9d9d9" stroke="#555" stroke-width="1.1"/>
<path d="M13.7 20.6H25V32.5H13.7z" fill="#dcdcdc" stroke="#555" stroke-width="1.1"/>
<path d="M13.7 20.6L16.8 17.5H28.7L25 20.6z" fill="#ededed" stroke="#555" stroke-width="1"/>
<path d="M25 20.6L28.7 17.5V29.5L25 32.5z" fill="#c4c4c4" stroke="#555" stroke-width="1"/>
<path d="M1.1 9.3H13V20.6H1.1z" fill="#64ace3"/>
<path d="M1.1 9.3L3.6 5.8H16.5L13 9.3z" fill="#8cc8f5"/>
<path d="M13 9.3L16.5 5.8V17.5L13 20.6z" fill="#3f8fcf"/>
<path d="M24.3 1.5L25.6 5.8L29.6 3.6L27.5 7.6L32 9.3L27.5 11L29.6 15L25.6 12.8L24.3 17.1L23 12.8L19 15L21.1 11L16.6 9.3L21.1 7.6L19 3.6L23 5.8z" fill="#f6a40e"/>
</svg>
<!-- CREATE: sketch -->
<svg class="a" style="left:181px;top:90px" width="33" height="33" viewBox="0 0 33 33">
<g fill="#555"><rect x="0.5" y="0.5" width="3" height="3"/><rect x="28" y="0.5" width="3" height="3"/><rect x="0.5" y="28" width="3" height="3"/><rect x="7.5" y="7.5" width="3" height="3"/><rect x="20.5" y="7.5" width="3" height="3"/><rect x="7.5" y="20.5" width="3" height="3"/></g>
<path d="M5 2H27M2 5V27M30 5V22M5 29.5H20M12 9H20M9 12V19M22 11Q21 20 12 22" stroke="#555" stroke-width="1.2" fill="none"/>
<path d="M22.5 18H27.5V23H32.5V28H27.5V33H22.5V28H17.5V23H22.5z" fill="#23a84a"/>
</svg>
<!-- MODIFY: press pull -->
<svg class="a" style="left:236px;top:89px" width="31" height="34" viewBox="0 0 31 34">
<path d="M0.5 33V6.5L6 1H10.5V33z" fill="#dcdcdc" stroke="#555" stroke-width="1.1"/>
<path d="M7 33V6.5L12.5 1H22V27.5L16 33z" fill="#64ace3"/>
<path d="M7 6.5L12.5 1H22L16 6.5z" fill="#8cc8f5"/>
<path d="M16 6.5L22 1V27.5L16 33z" fill="#3f8fcf"/>
<rect x="18" y="12" width="6" height="4" fill="#f1f1f1"/>
<path d="M18.5 14H27" stroke="#222" stroke-width="1.4"/><path d="M25 10.5L29 14L25 17.5z" fill="#222"/>
</svg>
<!-- MODIFY: fillet (active) -->
<div class="a" style="left:275px;top:87px;width:38px;height:38px;background:#0696d7"></div>
<svg class="a" style="left:277px;top:89px" width="34" height="34" viewBox="0 0 34 34">
<path d="M2 11L9 4H18L14 10H2z" fill="#f3f3f3"/>
<path d="M2 10.5H13Q24 10.5 24 21.5V32H2z" fill="#d8d8d8"/>
<path d="M13 10.5Q24 10.5 24 21.5L31 14.5Q31 4 18.5 3.5z" fill="#8ecbf5" stroke="#0a8ad0" stroke-width="1"/>
<path d="M24 21.5L31 14.5V25L24 32z" fill="#bdbdbd"/>
</svg>
<!-- MODIFY: shell -->
<svg class="a" style="left:321px;top:89px" width="33" height="34" viewBox="0 0 33 34">
<path d="M0.6 32.5V8L7.5 1H31.5V25.5L24 32.5z" fill="#d3d3d3" stroke="#555" stroke-width="1.2"/>
<path d="M0.6 8H24V32.5M24 8L31.5 1" fill="none" stroke="#555" stroke-width="1"/>
<path d="M0.6 8L7.5 1H31.5L24 8z" fill="#f0f0f0" stroke="#555" stroke-width="1"/>
<path d="M24 8L31.5 1V25.5L24 32.5z" fill="#bdbdbd" stroke="#555" stroke-width="1"/>
<rect x="3.5" y="10.5" width="18" height="19" fill="#eeeeee"/>
<path d="M4 11H11V20H20V28H4z" fill="#8ecbf5"/><path d="M4 11H11V20L4 28z" fill="#4f97d2"/>
</svg>
<!-- MODIFY: combine -->
<svg class="a" style="left:364px;top:89px" width="33" height="34" viewBox="0 0 33 34">
<path d="M10 4.5L14 0.5H32V21L28 25H24.5V29L20.5 33H0.5V13L4.5 9H10z" fill="#64ace3"/>
<path d="M10 4.5L14 0.5H32L28 4.5zM0.5 13L4.5 9H10V13z" fill="#8cc8f5"/>
<path d="M28 4.5L32 0.5V21L28 25zM20.5 33L24.5 29V25H20.5z" fill="#3f8fcf"/>
</svg>
<!-- MODIFY: split -->
<svg class="a" style="left:407px;top:89px" width="33" height="34" viewBox="0 0 33 34">
<path d="M2 6L7 1H28.5V15L23.5 20H2z" fill="#64ace3"/>
<path d="M2 6L7 1H28.5L23.5 6z" fill="#8cc8f5"/>
<path d="M23.5 6L28.5 1V15L23.5 20z" fill="#3f8fcf"/>
<path d="M2 17.5H23.5L31 11" stroke="#fff" stroke-width="3" fill="none"/>
<path d="M0 19H23L31 12" stroke="#1a8fe0" stroke-width="1.2" fill="none"/>
<path d="M3.5 22.5H23L28.5 18V27L23.5 31.5H3.5z" fill="#d5d5d5" stroke="#555" stroke-width="1.2"/>
<path d="M23.5 22.5V31.5" stroke="#aaa" stroke-width="1"/>
</svg>
<!-- MODIFY: move -->
<svg class="a" style="left:450px;top:89px" width="33" height="34" viewBox="0 0 33 34">
<path d="M16 3V31M3 16H29" stroke="#2b2b2b" stroke-width="2.4"/>
<path d="M16 1L21.5 8H10.5zM16 33L21.5 26H10.5zM0.5 16L7.5 10.5V21.5zM31.5 16L24.5 10.5V21.5z" fill="#2b2b2b"/>
</svg>
<!-- ASSEMBLE: new component -->
<svg class="a" style="left:503px;top:89px" width="34" height="34" viewBox="0 0 34 34">
<path d="M1.1 20.6H13.7V32.5H1.1z" fill="#d9d9d9" stroke="#555" stroke-width="1.1"/>
<path d="M13.7 20.6H25V32.5H13.7z" fill="#dcdcdc" stroke="#555" stroke-width="1.1"/>
<path d="M13.7 20.6L16.8 17.5H28.7L25 20.6z" fill="#ededed" stroke="#555" stroke-width="1"/>
<path d="M25 20.6L28.7 17.5V29.5L25 32.5z" fill="#c4c4c4" stroke="#555" stroke-width="1"/>
<path d="M1.1 9.3H13V20.6H1.1z" fill="#64ace3"/>
<path d="M1.1 9.3L3.6 5.8H16.5L13 9.3z" fill="#8cc8f5"/>
<path d="M13 9.3L16.5 5.8V17.5L13 20.6z" fill="#3f8fcf"/>
<path d="M24.3 1.5L25.6 5.8L29.6 3.6L27.5 7.6L32 9.3L27.5 11L29.6 15L25.6 12.8L24.3 17.1L23 12.8L19 15L21.1 11L16.6 9.3L21.1 7.6L19 3.6L23 5.8z" fill="#f6a40e"/>
</svg>
<!-- ASSEMBLE: joint -->
<svg class="a" style="left:549px;top:91px" width="30" height="30" viewBox="0 0 30 30">
<path d="M1 8L8 1H12V12L8 16V22L1 28z" fill="#d0d0d0" stroke="#555" stroke-width="1.1"/>
<path d="M8 1H12V12" fill="#e8e8e8" stroke="#555" stroke-width="1"/>
<path d="M19 3L27.5 11V28L19 20z" fill="#d0d0d0" stroke="#555" stroke-width="1.1"/>
<path d="M15 10V21H19V10z" fill="#c0c0c0" stroke="#555" stroke-width="1"/>
<path d="M9 13V19M18 6V12" stroke="#1a8fe0" stroke-width="1.3"/>
</svg>
<!-- CONSTRUCT -->
<svg class="a" style="left:627px;top:89px" width="32" height="33" viewBox="0 0 32 33">
<path d="M0.7 32V9L8.5 1.5H17.5V32z" fill="#dcdcdc" stroke="#555" stroke-width="1.2"/>
<path d="M8 32V9L17.5 1.5V24.5z" fill="#4fc27a" stroke="#555" stroke-width="0.6"/>
<path d="M21 32V9L30.5 1.5V24.5z" fill="#e59866"/>
</svg>
<!-- INSPECT -->
<svg class="a" style="left:722px;top:96px" width="31" height="20" viewBox="0 0 31 20">
<path d="M1 1V9M30 1V9M2 5H29" stroke="#555" stroke-width="1.1"/><path d="M1.5 5L5 3V7zM29.5 5L26 3V7z" fill="#555"/>
<rect x="1" y="11.5" width="29" height="7" fill="#f2a516"/>
<path d="M4 11.5V14M7 11.5V13M10 11.5V14M13 11.5V13M16 11.5V14M19 11.5V13M22 11.5V14M25 11.5V13M28 11.5V14" stroke="#8a5a00" stroke-width="0.8"/>
</svg>
<!-- INSERT: svg -->
<svg class="a" style="left:789px;top:89px" width="34" height="34" viewBox="0 0 34 34">
<path d="M7 9V1H22L33 12V22H7" fill="#f1f1f1" stroke="#555" stroke-width="1"/>
<path d="M22 1L33 12H22z" fill="#f0b848"/>
<rect x="7" y="21" width="26" height="12.5" fill="#e8a523"/>
<path d="M0 10H9V6L15 11.5L9 17V13H0z" fill="#1b8fe3"/>
<circle cx="11.5" cy="27" r="3.2" fill="none" stroke="#222" stroke-width="1.3"/>
<text x="16" y="31.5" font-family="Liberation Sans" font-weight="bold" font-size="8.5" fill="#fff">SVG</text>
</svg>
<!-- INSERT: mesh -->
<svg class="a" style="left:833px;top:89px" width="33" height="34" viewBox="0 0 33 34">
<path d="M5 30V8L12 1H31V23L24 30z" fill="#dedede" stroke="#555" stroke-width="1.1"/>
<path d="M5 8H24V30M24 8L31 1" fill="none" stroke="#555" stroke-width="1"/>
<path d="M24 8L31 1V23L24 30z" fill="#c4c4c4"/>
<path d="M1 26Q3 19 11 18.5V15L18 21L11 26.5V23Q5 23 1 26z" fill="#333"/>
</svg>
<!-- INSERT: canvas -->
<svg class="a" style="left:876px;top:90px" width="31" height="31" viewBox="0 0 31 31">
<rect x="0.5" y="0.5" width="30" height="30" fill="#3a8fd0"/>
<path d="M1 10V30.5H30V22Q26 12 22 22Q17 8 12 12Q7 4 1 10z" fill="#2d75b8" opacity="0"/>
<rect x="0.5" y="0.5" width="30" height="30" fill="#6db3ea"/>
<path d="M0.5 30.5V14Q8 6 15 16Q19 21 22 17Q26 13 30.5 21V30.5z" fill="#2f7fc3"/>
<circle cx="22" cy="8" r="3" fill="#f6f0c8"/>
</svg>
<!-- SELECT -->
<svg class="a" style="left:941px;top:89px" width="34" height="34" viewBox="0 0 34 34">
<rect x="0.8" y="0.8" width="27.5" height="22" fill="none" stroke="#2eae4e" stroke-width="1.2" stroke-dasharray="3 2"/>
<path d="M21 15V31L24.5 27.5L27.5 33.5L30 32.5L27 26.5H32z" fill="#f8f8f8" stroke="#333" stroke-width="1"/>
</svg>

<!-- unsaved bar -->
<div class="a" style="left:506px;top:153px;width:265px;height:23px;background:#f0f0f0"></div>
<svg class="a" style="left:508px;top:155px" width="19" height="17"><path d="M9.5 0.5L18.5 16.5H0.5z" fill="#f79d1e"/><rect x="8.5" y="5" width="2" height="6.5" fill="#fff"/><rect x="8.5" y="13" width="2" height="2" fill="#fff"/></svg>
<div class="t" style="left:532px;top:159px;font-size:11px;font-weight:bold;color:#3a3a3a">Unsaved:</div>
<div class="t" style="left:601px;top:159px;font-size:11px;color:#3a3a3a">Changes may be lost</div>
<div class="a" style="left:721px;top:154px;width:1px;height:21px;background:#cfcfcf"></div>
<div class="t" style="left:735px;top:159px;font-size:11px;color:#1b75bb">Save</div>
<!-- browser -->
<div class="a" style="left:5px;top:152px;width:300px;height:25px;background:#f0f0f0;border:1px solid #c9c9c9"></div>
<svg class="a" style="left:10px;top:161px" width="11" height="7"><path d="M5 0V7L0 3.5zM10.5 0V7L5.5 3.5z" fill="#444"/></svg>
<div class="t" style="left:30px;top:159px;font-size:11px;color:#555">BROWSER</div>
<svg class="a" style="left:284px;top:159px" width="10" height="10"><circle cx="5" cy="5" r="4.6" fill="#333"/><rect x="2.3" y="4.2" width="5.4" height="1.6" fill="#fff"/></svg>
<div class="a" style="left:300px;top:158px;width:1px;height:12px;background:#888"></div><div class="a" style="left:302px;top:158px;width:1px;height:12px;background:#bbb"></div>
<!-- tree -->
<svg class="a" style="left:21px;top:185px" width="12" height="14"><defs><linearGradient id="tri" x1="0" y1="0" x2="1" y2="1"><stop offset="0" stop-color="#eee"/><stop offset="1" stop-color="#777"/></linearGradient></defs><path d="M11 1V13H1z" fill="url(#tri)" stroke="#222" stroke-width="1"/></svg>
<div class="a" style="left:41px;top:183px;width:152px;height:19px;background:rgba(238,238,238,.92)"></div>
<div class="a" style="left:43px;top:184px;width:3px;height:15px;background:#dd88dd"></div>
<svg class="a" style="left:49px;top:187px" width="16" height="10"><path d="M0.5 5Q8 -2.5 15.5 5Q8 12.5 0.5 5z" fill="#aaa"/><circle cx="8" cy="5" r="2.8" fill="#eee"/><circle cx="8" cy="5" r="1.6" fill="#aaa"/></svg>
<div class="a" style="left:71px;top:184px;width:97px;height:16px;background:#9a9a9a"></div>
<svg class="a" style="left:73px;top:184px" width="17" height="16"><path d="M4 1.5H15V12L12 15H1.5V4.5z" fill="#e6e6ea" stroke="#444" stroke-width="1"/><path d="M1.5 4.5H12V15M12 4.5L15 1.5" fill="none" stroke="#444" stroke-width="1"/></svg>
<div class="t" style="left:104px;top:187px;font-size:11px;font-weight:bold;color:#fff">(Unsaved)</div>
<svg class="a" style="left:172px;top:185px" width="15" height="15"><circle cx="7.5" cy="7.5" r="6.3" fill="#fff" stroke="#222" stroke-width="1.2"/><circle cx="7.5" cy="7.5" r="2.7" fill="#222"/></svg>
<!-- rows -->
<div class="a" style="left:59px;top:207px;width:138px;height:19px;background:rgba(238,238,238,.92)"></div>
<div class="a" style="left:59px;top:231px;width:110px;height:19px;background:rgba(238,238,238,.92)"></div>
<div class="a" style="left:59px;top:255px;width:99px;height:19px;background:rgba(238,238,238,.92)"></div>
<div class="a" style="left:59px;top:279px;width:103px;height:19px;background:rgba(238,238,238,.92)"></div>
<div class="a" style="left:59px;top:303px;width:115px;height:19px;background:rgba(238,238,238,.92)"></div>
<svg class="a" style="left:40px;top:208px" width="12" height="120"><g fill="#fff" stroke="#222" stroke-width="1.1"><path d="M1.5 1.5L10 8L1.5 14.5z"/><path d="M1.5 25.5L10 32L1.5 38.5z"/><path d="M1.5 49.5L10 56L1.5 62.5z"/><path d="M1.5 73.5L10 80L1.5 86.5z"/><path d="M1.5 97.5L10 104L1.5 110.5z"/></g></svg>
<svg class="a" style="left:61px;top:208px" width="17" height="17"><g fill="#8f8f8f"><circle cx="8.5" cy="8.5" r="5.3"/><g stroke="#8f8f8f" stroke-width="3"><path d="M8.5 0.5V16.5M0.5 8.5H16.5M2.8 2.8L14.2 14.2M14.2 2.8L2.8 14.2"/></g></g><circle cx="8.5" cy="8.5" r="2.4" fill="#eee"/></svg>
<div class="t" style="left:92px;top:211px;font-size:11px;color:#333">Document Settings</div>
<svg class="a" style="left:62px;top:233px" width="17" height="15"><path d="M0 1H6L7.5 3H16V14H0z" fill="#8f8f8f"/><path d="M0 4H16" stroke="#eee" stroke-width="0.8"/></svg>
<div class="t" style="left:92px;top:235px;font-size:11px;color:#333">Named Views</div>
<svg class="a" style="left:62px;top:258px" width="17" height="13"><path d="M1 6.5Q8.5 -1 16 6.5Q8.5 14 1 6.5z" fill="none" stroke="#9a9a9a" stroke-width="1.3"/><circle cx="8.5" cy="6.5" r="2.3" fill="#9a9a9a"/><path d="M2 1L15 12" stroke="#9a9a9a" stroke-width="1.3"/></svg>
<svg class="a" style="left:86px;top:257px" width="17" height="15"><path d="M0 1H6L7.5 3H16V14H0z" fill="#8f8f8f"/><path d="M0 4H16" stroke="#eee" stroke-width="0.8"/></svg>
<div class="t" style="left:117px;top:259px;font-size:11px;color:#333">Origin</div>
<svg class="a" style="left:62px;top:283px" width="17" height="11"><path d="M0.5 5.5Q8.5 -3 16.5 5.5Q8.5 14 0.5 5.5z" fill="#9a9a9a"/><circle cx="8.5" cy="5.5" r="3" fill="#eee"/><circle cx="8.5" cy="5.5" r="1.7" fill="#9a9a9a"/></svg>
<svg class="a" style="left:86px;top:281px" width="17" height="15"><path d="M0 1H6L7.5 3H16V14H0z" fill="#8f8f8f"/><path d="M0 4H16" stroke="#eee" stroke-width="0.8"/></svg>
<div class="t" style="left:117px;top:283px;font-size:11px;color:#333">Bodies</div>
<svg class="a" style="left:83px;top:291px" width="78" height="6"><path d="M1 5L4 1M8 5L11 1M15 5L18 1M22 5L25 1M29 5L32 1M36 5L39 1M43 5L46 1M50 5L53 1M57 5L60 1M64 5L67 1M71 5L74 1" stroke="#5d7ba6" stroke-width="1.3"/></svg>
<svg class="a" style="left:62px;top:307px" width="17" height="11"><path d="M0.5 5.5Q8.5 -3 16.5 5.5Q8.5 14 0.5 5.5z" fill="#9a9a9a"/><circle cx="8.5" cy="5.5" r="3" fill="#eee"/><circle cx="8.5" cy="5.5" r="1.7" fill="#9a9a9a"/></svg>
<svg class="a" style="left:86px;top:305px" width="17" height="15"><path d="M0 1H6L7.5 3H16V14H0z" fill="#8f8f8f"/><path d="M0 4H16" stroke="#eee" stroke-width="0.8"/></svg>
<div class="t" style="left:117px;top:307px;font-size:11px;color:#333">Sketches</div>
<!-- comments -->
<div class="a" style="left:5px;top:960px;width:300px;height:25px;background:#f0f0f0;border:1px solid #c9c9c9"></div>
<div class="t" style="left:30px;top:967px;font-size:11px;color:#555">COMMENTS</div>
<svg class="a" style="left:284px;top:967px" width="10" height="10"><circle cx="5" cy="5" r="4.6" fill="#333"/><path d="M2.3 5H7.7M5 2.3V7.7" stroke="#fff" stroke-width="1.5"/></svg>
<div class="a" style="left:300px;top:966px;width:1px;height:12px;background:#888"></div><div class="a" style="left:302px;top:966px;width:1px;height:12px;background:#bbb"></div>
<!-- nav toolbar -->
<div class="a" style="left:520px;top:961px;width:237px;height:24px;background:#efefef"></div>
<svg class="a" style="left:522px;top:963px" width="235" height="20" viewBox="0 0 235 20">
<g stroke="#333" fill="none" stroke-width="1.3"><path d="M9 2V18"/><path d="M2 11Q2 7 9 7Q16 7 16 11Q16 15 9 15"/></g><path d="M9 0.5L6.5 4H11.5z" fill="#333"/><path d="M7 13L3 15L7 17z" fill="#333"/>
<path d="M20 8H27L23.5 12z" fill="#333"/>
<g transform="translate(34,0)"><rect x="1" y="7" width="15" height="11" fill="#f4f4f4" stroke="#444" stroke-width="1.2"/><rect x="4" y="10.5" width="9" height="4" fill="#b0b0b0" stroke="#555" stroke-width="0.8"/><path d="M3 7L5 3L8 5L11 2L14 7" fill="#ccc" stroke="#444" stroke-width="1"/></g>
<g transform="translate(60,0)"><path d="M5 18Q1 13 2 10Q3 9 4.5 11V4Q4.5 2.5 6 2.5Q7.5 2.5 7.5 4V2Q7.5 0.5 9 0.5Q10.5 0.5 10.5 2V3Q10.5 1.5 12 1.5Q13.5 1.5 13.5 3V5Q13.5 3.5 15 3.5Q16.5 3.5 16.5 5V12Q16.5 16 13 18z" fill="#f4f4f4" stroke="#444" stroke-width="1.1"/></g>
<g transform="translate(85,0)"><circle cx="7" cy="9" r="5.5" fill="#d8eaf6" stroke="#444" stroke-width="1.4"/><path d="M11 13L16 18" stroke="#444" stroke-width="2.6"/><path d="M14 1V7M11 4H17" stroke="#444" stroke-width="1.1"/></g>
<g transform="translate(111,0)"><circle cx="7.5" cy="9" r="6" fill="#f4f4f4" stroke="#444" stroke-width="1.4"/><rect x="4.5" y="6" width="6" height="6" fill="none" stroke="#444" stroke-width="1"/><path d="M12 13.5L16.5 18" stroke="#444" stroke-width="2.6"/></g>
<path d="M134 8H141L137.5 12z" fill="#333"/>
<g transform="translate(145,0)"><rect x="1" y="2" width="16" height="12" rx="1" fill="#8fb8e0" stroke="#444" stroke-width="1.3"/><rect x="3" y="4" width="12" height="8" fill="#a9cdf0"/><path d="M6 17H12M9 14V17" stroke="#444" stroke-width="1.5"/></g>
<path d="M164 8H171L167.5 12z" fill="#333"/>
<g transform="translate(176,0)"><rect x="1" y="2" width="15" height="15" fill="#8a8a8a" stroke="#555" stroke-width="1"/><path d="M4.7 2V17M8.5 2V17M12.2 2V17M1 5.7H16M1 9.5H16M1 13.2H16" stroke="#f0f0f0" stroke-width="0.9"/></g>
<path d="M196 8H203L199.5 12z" fill="#333"/>
<g transform="translate(207,0)"><rect x="1" y="2" width="15" height="15" fill="#3a5ea8"/><rect x="2.5" y="3.5" width="5.5" height="5" fill="#9fc0ea"/><rect x="9" y="3.5" width="5.5" height="5" fill="#9fc0ea"/><rect x="2.5" y="10.5" width="5.5" height="5" fill="#9fc0ea"/><rect x="9" y="10.5" width="5.5" height="5" fill="#9fc0ea"/></g>
<path d="M226 8H233L229.5 12z" fill="#333"/>
</svg>
<div class="t" style="left:1208px;top:968px;font-size:11px;font-weight:bold;color:#333">12 Edges</div>
<!-- timeline -->
<div class="a" style="left:1px;top:989px;width:1275px;height:50px;background:#f1f1f1;border-top:1px solid #d0d0d0"></div>
<svg class="a" style="left:10px;top:1006px" width="120" height="16"><g fill="#3c3c3c"><rect x="2" y="1" width="2" height="14"/><path d="M14 1V15L5 8z"/><path d="M35 1V15L27 8z"/><rect x="36" y="5" width="3" height="6"/><path d="M52 1V15L63 8z"/><path d="M80 1V15L88 8z"/><rect x="76" y="5" width="3" height="6"/><path d="M102 1V15L111 8z"/><rect x="112" y="1" width="2" height="14"/></g></svg>
<div class="a" style="left:145px;top:997px;width:308px;height:6px;background:#e08de0"></div>
<svg class="a" style="left:170px;top:995px" width="18" height="8"><path d="M1 7L5 1M6 7L10 1M11 7L15 1" stroke="#333" stroke-width="2"/></svg>
<svg class="a" style="left:147px;top:1005px" width="17" height="17"><rect x="1.5" y="1.5" width="12" height="12" fill="none" stroke="#444" stroke-width="1" stroke-dasharray="2 1.5"/><g fill="#1a8fe0"><rect x="0" y="0" width="3" height="3"/><rect x="12" y="0" width="3" height="3"/><rect x="0" y="12" width="3" height="3"/></g><path d="M8 16L15 9L17 11L10 17z" fill="#f2b233"/><circle cx="15.5" cy="9.5" r="1.6" fill="#e33"/></svg><svg class="a" style="left:171px;top:1005px" width="17" height="17"><path d="M1 4L4 1H12V12L9 15H1z" fill="#64ace3"/><path d="M1 4L4 1H12L9 4z" fill="#8cc8f5"/><path d="M9 4L12 1V12L9 15z" fill="#3f8fcf"/><path d="M1 16H9L12 13" stroke="#bbb" stroke-width="1.5" fill="none"/><path d="M15 3V15" stroke="#222" stroke-width="1.2"/><path d="M15 1L13 4.5H17z" fill="#222"/></svg><svg class="a" style="left:194px;top:1005px" width="17" height="17"><rect x="1.5" y="1.5" width="12" height="12" fill="none" stroke="#444" stroke-width="1" stroke-dasharray="2 1.5"/><g fill="#1a8fe0"><rect x="0" y="0" width="3" height="3"/><rect x="12" y="0" width="3" height="3"/><rect x="0" y="12" width="3" height="3"/></g><path d="M8 16L15 9L17 11L10 17z" fill="#f2b233"/><circle cx="15.5" cy="9.5" r="1.6" fill="#e33"/></svg><svg class="a" style="left:218px;top:1005px" width="17" height="17"><path d="M1 4L4 1H12V12L9 15H1z" fill="#64ace3"/><path d="M1 4L4 1H12L9 4z" fill="#8cc8f5"/><path d="M9 4L12 1V12L9 15z" fill="#3f8fcf"/><path d="M1 16H9L12 13" stroke="#bbb" stroke-width="1.5" fill="none"/><path d="M15 3V15" stroke="#222" stroke-width="1.2"/><path d="M15 1L13 4.5H17z" fill="#222"/></svg><svg class="a" style="left:241px;top:1005px" width="17" height="17"><path d="M7 1V15H1z" fill="#fff" stroke="#444" stroke-width="1"/><path d="M9 1V15H15z" fill="#4f9fdc"/></svg><svg class="a" style="left:265px;top:1005px" width="17" height="17"><path d="M7 1V15H1z" fill="#fff" stroke="#444" stroke-width="1"/><path d="M9 1V15H15z" fill="#4f9fdc"/></svg><svg class="a" style="left:289px;top:1005px" width="17" height="17"><path d="M1 3L3 1H16V14L14 16H1z" fill="#ddd" stroke="#555" stroke-width="1"/><circle cx="8" cy="9" r="5" fill="#f2f2f2" stroke="#444" stroke-width="1.1"/><path d="M5 9Q5 12 8 12Q10 12 11 10Q8 11 7 8z" fill="#4f9fdc"/></svg><svg class="a" style="left:312px;top:1005px" width="17" height="17"><rect x="1" y="1" width="4" height="4" fill="#fff" stroke="#444" stroke-width="1"/><g fill="#4f9fdc"><rect x="11" y="0.5" width="5" height="5"/><rect x="0.5" y="11" width="5" height="5"/><rect x="11" y="11" width="5" height="5"/></g><path d="M6 3H10M3 6V10M6 13.5H10" stroke="#444" stroke-width="1" stroke-dasharray="1.5 1"/></svg><svg class="a" style="left:336px;top:1005px" width="17" height="17"><path d="M1 3L3 1H16V14L14 16H1z" fill="#ddd" stroke="#555" stroke-width="1"/><circle cx="8" cy="9" r="5" fill="#f2f2f2" stroke="#444" stroke-width="1.1"/><path d="M5 9Q5 12 8 12Q10 12 11 10Q8 11 7 8z" fill="#4f9fdc"/></svg><svg class="a" style="left:359px;top:1005px" width="17" height="17"><path d="M1 3L3 1H16V14L14 16H1z" fill="#ddd" stroke="#555" stroke-width="1"/><circle cx="8" cy="9" r="5" fill="#f2f2f2" stroke="#444" stroke-width="1.1"/><path d="M5 9Q5 12 8 12Q10 12 11 10Q8 11 7 8z" fill="#4f9fdc"/></svg><svg class="a" style="left:383px;top:1005px" width="17" height="17"><path d="M7 1V15H1z" fill="#fff" stroke="#444" stroke-width="1"/><path d="M9 1V15H15z" fill="#4f9fdc"/></svg><svg class="a" style="left:407px;top:1005px" width="17" height="17"><rect x="1.5" y="1.5" width="12" height="12" fill="none" stroke="#444" stroke-width="1" stroke-dasharray="2 1.5"/><g fill="#1a8fe0"><rect x="0" y="0" width="3" height="3"/><rect x="12" y="0" width="3" height="3"/><rect x="0" y="12" width="3" height="3"/></g><path d="M8 16L15 9L17 11L10 17z" fill="#f2b233"/><circle cx="15.5" cy="9.5" r="1.6" fill="#e33"/></svg><svg class="a" style="left:430px;top:1005px" width="17" height="17"><path d="M1 4L4 1H12V12L9 15H1z" fill="#64ace3"/><path d="M1 4L4 1H12L9 4z" fill="#8cc8f5"/><path d="M9 4L12 1V12L9 15z" fill="#3f8fcf"/><path d="M1 16H9L12 13" stroke="#bbb" stroke-width="1.5" fill="none"/><path d="M15 3V15" stroke="#222" stroke-width="1.2"/><path d="M15 1L13 4.5H17z" fill="#222"/></svg>
<svg class="a" style="left:154px;top:1022px" width="292" height="10"><path d="M1.5 1V8.5H290.5V1" stroke="#c8c8c8" stroke-width="2" fill="none"/><g stroke="#c8c8c8" stroke-width="2"><path d="M1.5 2V8"/><path d="M25.1 2V8"/><path d="M48.7 2V8"/><path d="M72.3 2V8"/><path d="M95.9 2V8"/><path d="M119.5 2V8"/><path d="M143.1 2V8"/><path d="M166.7 2V8"/><path d="M190.3 2V8"/><path d="M213.9 2V8"/><path d="M237.5 2V8"/><path d="M261.1 2V8"/><path d="M284.7 2V8"/></g></svg>
<svg class="a" style="left:447px;top:997px" width="16" height="34"><path d="M0.5 1H15.5V3L9 10H7L0.5 3z" fill="#666"/><rect x="7" y="9" width="2.2" height="24" fill="#555"/></svg>
<svg class="a" style="left:1246px;top:1005px" width="18" height="18"><g fill="#8c8c8c"><circle cx="9" cy="9" r="5.6"/><g stroke="#8c8c8c" stroke-width="3.2"><path d="M9 0.8V17.2M0.8 9H17.2M3.2 3.2L14.8 14.8M14.8 3.2L3.2 14.8"/></g></g><circle cx="9" cy="9" r="2.6" fill="#f0f0f0"/></svg>
<!-- viewcube -->
<svg class="a" style="left:1160px;top:168px" width="100" height="105" viewBox="1160 168 100 105">
<defs><radialGradient id="csh" cx="0.5" cy="0.5" r="0.5"><stop offset="0" stop-color="#000" stop-opacity="0.22"/><stop offset="1" stop-color="#000" stop-opacity="0"/></radialGradient>
<linearGradient id="cf" x1="0" y1="0" x2="0" y2="1"><stop offset="0" stop-color="#ececec"/><stop offset="1" stop-color="#d6d6d6"/></linearGradient></defs>
<ellipse cx="1216" cy="240" rx="38" ry="18" fill="url(#csh)"/>
<path d="M1207.5 176.5L1246 188.3L1218.4 208.4L1177.5 192.3z" fill="#eeeeee" stroke="#9a9a9a" stroke-width="0.8" stroke-dasharray="2.5 1.5"/>
<path d="M1177.5 192.3L1218.4 208.4L1217.3 251.1L1179.8 233.2z" fill="url(#cf)" stroke="#9a9a9a" stroke-width="0.8" stroke-dasharray="2.5 1.5"/>
<path d="M1218.4 208.4L1246 188.3L1243.2 227.5L1217.3 251.1z" fill="url(#cf)" stroke="#9a9a9a" stroke-width="0.8" stroke-dasharray="2.5 1.5"/>
<text x="0" y="0" transform="translate(1185,217) rotate(22)" font-family="Liberation Sans" font-size="9.5" fill="#999" letter-spacing="0.3">FRONT</text>
<text x="0" y="0" transform="translate(1225,229) rotate(-52)" font-family="Liberation Sans" font-size="8.5" fill="#999">RIGHT</text>
<text x="0" y="0" transform="translate(1203,192) rotate(18) skewX(30)" font-family="Liberation Sans" font-size="7.5" fill="#aaa">TOP</text>
<path d="M1176 187L1180 234" stroke="#4a4aff" stroke-width="1.8"/>
<path d="M1180 234L1225 257" stroke="#f08a8a" stroke-width="1.8"/>
<text x="1170" y="184" font-family="Liberation Sans" font-size="13" fill="#6b6bff">Z</text>
<text x="1226" y="265" font-family="Liberation Sans" font-size="13" fill="#ff7b7b">X</text>
</svg>
<!-- fillet dialog -->
<div class="a" style="left:872px;top:272px;width:400px;height:373px;background:#f0f0f0;border:1px solid #c6c6c6"></div>
<div class="a" style="left:873px;top:296px;width:398px;height:1px;background:#d6d6d6"></div>
<div class="a" style="left:874px;top:279px;width:1px;height:11px;background:#555"></div><div class="a" style="left:876px;top:279px;width:1px;height:11px;background:#aaa"></div>
<svg class="a" style="left:883px;top:279px" width="10" height="10"><circle cx="5" cy="5" r="4.6" fill="#333"/><rect x="2.3" y="4.2" width="5.4" height="1.6" fill="#fff"/></svg>
<div class="t" style="left:898px;top:279px;font-size:11px;color:#555">FILLET</div>
<svg class="a" style="left:1257px;top:280px" width="11" height="8"><path d="M0 0V8L5 4zM5.5 0V8L10.5 4z" fill="#333"/></svg>
<div class="t" style="left:885px;top:307px;font-size:11px;color:#333">Type</div>
<div class="a" style="left:1009px;top:299px;width:231px;height:27px;background:#fff;border:1px solid #d4d4d4;border-radius:2px"></div>
<svg class="a" style="left:1012px;top:300px" width="18" height="22"><path d="M1.5 6V20.5H16.5V10Q16.5 3.5 9 3.5H4z" fill="#dedede" stroke="#444" stroke-width="1"/><path d="M9 2Q16.5 2.5 17 9.5" stroke="#3b8fd6" stroke-width="2.6" fill="none"/></svg>
<div class="t" style="left:1032px;top:307px;font-size:11px;color:#333">Fillet</div>
<div class="arr" style="left:1227px;top:310px"></div>
<div class="a" style="left:882px;top:333px;width:359px;height:112px;background:#fff;border:1px solid #d4d4d4"></div>
<div class="a" style="left:883px;top:334px;width:357px;height:25px;background:#a9cdf9"></div>
<div class="t" style="left:887px;top:341px;font-size:11px;color:#333">12 Edges</div>
<svg class="a" style="left:1022px;top:337px" width="18" height="22"><path d="M1.5 6V20.5H16.5V10Q16.5 3.5 9 3.5H4z" fill="#dedede" stroke="#444" stroke-width="1"/><path d="M9 2Q16.5 2.5 17 9.5" stroke="#3b8fd6" stroke-width="2.6" fill="none"/></svg>
<div class="a" style="left:1038px;top:335px;width:63px;height:23px;background:#fff;border:1px solid #c0c0c0"></div>
<div class="t" style="left:1041px;top:341px;font-size:11px;color:#333">0</div>
<svg class="a" style="left:1128px;top:337px" width="17" height="18"><path d="M1 2L5 1L15 7L7 11L5 17L1 16z" fill="#e4e4e4" stroke="#333" stroke-width="1"/><path d="M5 1L15 7L7 11z" fill="#6ba6d8" stroke="#333" stroke-width="0.8"/><path d="M1 2L5 17" stroke="#333" stroke-width="1"/></svg>
<div class="t" style="left:1149px;top:341px;font-size:11px;color:#333">Tangent (G1)</div>
<svg class="a" style="left:891px;top:423px" width="12" height="12"><path d="M6 0.5V11.5M0.5 6H11.5" stroke="#333" stroke-width="1.8"/></svg>
<svg class="a" style="left:918px;top:424px" width="10" height="10"><path d="M1 1L9 9M9 1L1 9" stroke="#333" stroke-width="1.8"/></svg>
<div class="t" style="left:885px;top:457px;font-size:11px;color:#333">Radius Type</div>
<div class="a" style="left:1009px;top:449px;width:231px;height:27px;background:#fff;border:1px solid #d4d4d4;border-radius:2px"></div>
<svg class="a" style="left:1012px;top:450px" width="18" height="22"><path d="M1.5 6V20.5H16.5V10Q16.5 3.5 9 3.5H4z" fill="#dedede" stroke="#444" stroke-width="1"/><path d="M9 2Q16.5 2.5 17 9.5" stroke="#3b8fd6" stroke-width="2.6" fill="none"/></svg>
<div class="t" style="left:1032px;top:457px;font-size:11px;color:#333">Constant</div>
<div class="arr" style="left:1227px;top:460px"></div>
<div class="t" style="left:885px;top:487px;font-size:11px;color:#333">Edges/Faces/Features</div>
<div class="a" style="left:1008px;top:478px;width:60px;height:28px;background:#0696d7;border-radius:2px"></div>
<svg class="a" style="left:1016px;top:484px" width="11" height="16"><path d="M1 1V13L4 10L6.5 15L8.5 14L6 9H10z" fill="#fff" stroke="#333" stroke-width="0.9"/></svg>
<div class="t" style="left:1030px;top:487px;font-size:11px;color:#fff">Select</div>
<div class="t" style="left:885px;top:517px;font-size:11px;color:#333">Tangent Chain</div>
<svg class="a" style="left:1012px;top:514px" width="16" height="16"><rect x="1" y="1" width="13" height="13" rx="2.5" fill="#d8d8d8" stroke="#555" stroke-width="1.1"/><path d="M3.8 7.5L6.5 10.5L11.5 3.5" stroke="#111" stroke-width="1.4" fill="none"/></svg>
<div class="t" style="left:885px;top:547px;font-size:11px;color:#333">Tangency Weight</div>
<div class="a" style="left:1009px;top:539px;width:230px;height:26px;background:#fff;border:1px solid #d4d4d4"></div>
<div class="t" style="left:1013px;top:547px;font-size:11px;color:#333">1.00</div>
<div class="a" style="left:874px;top:572px;width:384px;height:1px;background:#cfcfcf"></div>
<div class="t" style="left:885px;top:587px;font-size:11px;color:#333">Corner Type</div>
<div class="a" style="left:1009px;top:579px;width:231px;height:27px;background:#fff;border:1px solid #d4d4d4;border-radius:2px"></div>
<svg class="a" style="left:1011px;top:583px" width="18" height="18"><path d="M1 7L5 4H15V14L12 17H1z" fill="#5f9fd6" stroke="#444" stroke-width="0.8"/><path d="M1 7H12V17M12 7L15 4" fill="none" stroke="#444" stroke-width="0.8"/><rect x="1.5" y="9" width="6" height="7.5" fill="#eee" stroke="#444" stroke-width="0.8"/></svg>
<div class="t" style="left:1032px;top:587px;font-size:11px;color:#333">Rolling Ball</div>
<div class="arr" style="left:1227px;top:590px"></div>
<div class="a" style="left:873px;top:608px;width:398px;height:1px;background:#cfcfcf"></div>
<svg class="a" style="left:881px;top:620px" width="13" height="13"><circle cx="6.5" cy="6.5" r="6" fill="#222"/><rect x="5.6" y="5.2" width="1.8" height="5" fill="#fff"/><rect x="5.6" y="2.6" width="1.8" height="1.8" fill="#fff"/></svg>
<div class="a" style="left:1130px;top:617px;width:60px;height:20px;background:#e6e6e6;border:1px solid #cdcdcd"></div>
<div class="t" style="left:1151px;top:621px;font-size:12px;color:#a6a6a6">OK</div>
<div class="a" style="left:1200px;top:617px;width:60px;height:20px;background:#ececec;border:1px solid #bdbdbd"></div>
<div class="t" style="left:1211px;top:621px;font-size:12px;color:#333">Cancel</div>
<!-- tooltip -->
<div class="a" style="left:851px;top:640px;width:177px;height:17px;background:#f0f0f0;border:1px solid #5a5a5a"></div>
<div class="t" style="left:854px;top:642px;font-family:'Liberation Serif',serif;font-size:14.1px;color:#111">Hold Ctrl to modify selection</div>
<!-- 0 mm input -->
<div class="a" style="left:510px;top:585px;width:108px;height:22px;background:#efefef;border:1px solid #dadada"></div>
<svg class="a" style="left:513px;top:588px" width="8" height="17"><path d="M2 1V16M5 1V16" stroke="#c8c8c8" stroke-width="1" stroke-dasharray="1.5 1.5"/></svg>
<div class="a" style="left:524px;top:586px;width:70px;height:20px;background:#fff;border:1px solid #c4c4c4"></div>
<div class="a" style="left:544px;top:590px;width:29px;height:13px;background:#0a74d6"></div>
<div class="t" style="left:545px;top:591px;font-size:11px;color:#fff">0 mm</div>
<svg class="a" style="left:603px;top:587px" width="6" height="18"><g fill="#8a8a8a"><circle cx="3" cy="3.5" r="1.4"/><circle cx="3" cy="9" r="1.4"/><circle cx="3" cy="14.5" r="1.4"/></g></svg>

</body></html>
